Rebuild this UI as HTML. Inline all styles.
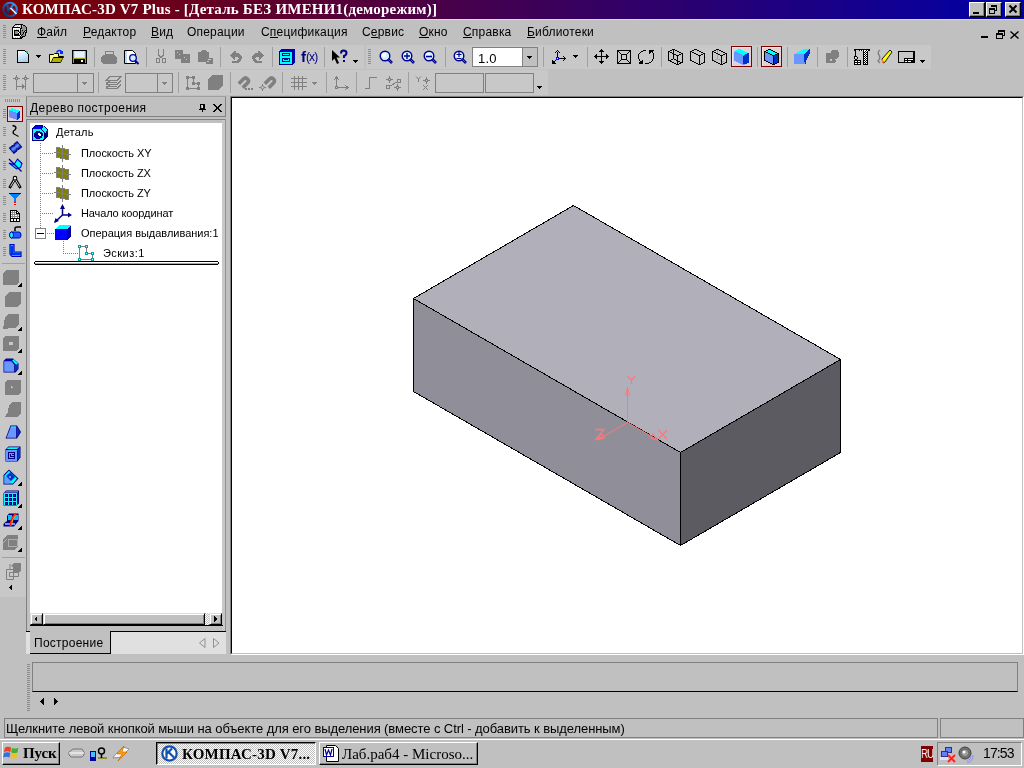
<!DOCTYPE html><html><head><meta charset="utf-8"><style>
html,body{margin:0;padding:0;width:1024px;height:768px;overflow:hidden;background:#c0c0c0;position:relative;font-family:"Liberation Sans",sans-serif}
div,span,svg{position:absolute;box-sizing:border-box}
span{will-change:transform}
svg{overflow:visible}
</style></head><body>
<div style="left:0px;top:0px;width:1024px;height:19px;background:linear-gradient(to right,#800000,#0000a8)"></div>
<svg style="left:2px;top:1px" width="17" height="17" viewBox="0 0 17 17"><defs><linearGradient id="lg1" x1="0" y1="1" x2="1" y2="0"><stop offset="0" stop-color="#002a66"/><stop offset="1" stop-color="#3a9cff"/></linearGradient></defs><circle cx="8" cy="8.5" r="6.8" fill="none" stroke="url(#lg1)" stroke-width="2"/><path d="M5.5 3.5 V13 M6 9.5 L12 3" stroke="url(#lg1)" stroke-width="2" fill="none"/><path d="M8.5 7 L14.5 13" stroke="#e8f4ff" stroke-width="1.6" fill="none"/><path d="M9.5 6 L15.5 12" stroke="#2080f0" stroke-width="1" fill="none"/></svg>
<span style="left:22px;top:1px;font-size:15px;line-height:normal;color:#fff;font-family:'Liberation Serif',serif;font-weight:bold;letter-spacing:0.2px;white-space:pre;">КОМПАС-3D V7 Plus - [Деталь БЕЗ ИМЕНИ1(деморежим)]</span>
<div style="left:0px;top:19px;width:1024px;height:1px;background:#d8d8d8"></div>
<div style="left:969px;top:2px;width:16px;height:15px;background:#c0c0c0;border-top:1px solid #fff;border-left:1px solid #fff;border-right:1px solid #000;border-bottom:1px solid #000;box-shadow:inset -1px -1px 0 #808080"></div>
<div style="left:986px;top:2px;width:16px;height:15px;background:#c0c0c0;border-top:1px solid #fff;border-left:1px solid #fff;border-right:1px solid #000;border-bottom:1px solid #000;box-shadow:inset -1px -1px 0 #808080"></div>
<div style="left:1005px;top:2px;width:16px;height:15px;background:#c0c0c0;border-top:1px solid #fff;border-left:1px solid #fff;border-right:1px solid #000;border-bottom:1px solid #000;box-shadow:inset -1px -1px 0 #808080"></div>
<svg style="left:969px;top:2px" width="16" height="15" viewBox="0 0 16 15" shape-rendering="crispEdges"><rect x="4" y="10" width="6" height="2" fill="#000"/></svg>
<svg style="left:986px;top:3px" width="16" height="14" viewBox="0 0 16 14" shape-rendering="crispEdges"><rect x="5" y="2" width="6" height="1" fill="#000"/><rect x="5" y="3" width="6" height="1" fill="#000"/><rect x="5" y="2" width="1" height="2" fill="#000"/><rect x="10" y="2" width="1" height="6" fill="#000"/><rect x="9" y="7" width="2" height="1" fill="#000"/><rect x="3" y="5" width="6" height="2" fill="#000"/><rect x="3" y="5" width="1" height="6" fill="#000"/><rect x="8" y="5" width="1" height="6" fill="#000"/><rect x="3" y="10" width="6" height="1" fill="#000"/></svg>
<svg style="left:1005px;top:2px" width="16" height="15" viewBox="0 0 16 15"><path d="M4.5 3.5 L11.5 10.5 M11.5 3.5 L4.5 10.5" fill="none" stroke="#000" stroke-width="2" /></svg>
<svg style="left:3px;top:25px" width="3" height="14" viewBox="0 0 3 14" shape-rendering="crispEdges"><rect x="0" y="0" width="3" height="1" fill="#8c8c8c"/><rect x="0" y="2" width="3" height="1" fill="#8c8c8c"/><rect x="0" y="4" width="3" height="1" fill="#8c8c8c"/><rect x="0" y="6" width="3" height="1" fill="#8c8c8c"/><rect x="0" y="8" width="3" height="1" fill="#8c8c8c"/><rect x="0" y="10" width="3" height="1" fill="#8c8c8c"/><rect x="0" y="12" width="3" height="1" fill="#8c8c8c"/></svg>
<svg style="left:11px;top:24px" width="16" height="16" viewBox="0 0 16 16" shape-rendering="crispEdges"><rect x="4" y="0" width="8" height="1" fill="#000"/><rect x="3" y="1" width="1" height="1" fill="#000"/><rect x="6" y="1" width="1" height="1" fill="#fff"/><rect x="8" y="1" width="1" height="1" fill="#fff"/><rect x="10" y="1" width="1" height="1" fill="#000"/><rect x="12" y="1" width="2" height="1" fill="#000"/><rect x="2" y="2" width="1" height="1" fill="#000"/><rect x="4" y="2" width="2" height="1" fill="#fff"/><rect x="7" y="2" width="2" height="1" fill="#fff"/><rect x="10" y="2" width="1" height="1" fill="#000"/><rect x="12" y="2" width="2" height="1" fill="#909090"/><rect x="14" y="2" width="1" height="1" fill="#000"/><rect x="1" y="3" width="8" height="1" fill="#000"/><rect x="10" y="3" width="1" height="1" fill="#000"/><rect x="11" y="3" width="4" height="1" fill="#909090"/><rect x="15" y="3" width="1" height="1" fill="#000"/><rect x="1" y="4" width="1" height="1" fill="#000"/><rect x="2" y="4" width="7" height="1" fill="#fff"/><rect x="9" y="4" width="2" height="1" fill="#000"/><rect x="11" y="4" width="4" height="1" fill="#909090"/><rect x="15" y="4" width="1" height="1" fill="#000"/><rect x="1" y="5" width="1" height="1" fill="#000"/><rect x="2" y="5" width="1" height="1" fill="#fff"/><rect x="4" y="5" width="1" height="1" fill="#fff"/><rect x="6" y="5" width="1" height="1" fill="#fff"/><rect x="8" y="5" width="1" height="1" fill="#fff"/><rect x="9" y="5" width="1" height="1" fill="#000"/><rect x="11" y="5" width="3" height="1" fill="#909090"/><rect x="15" y="5" width="1" height="1" fill="#000"/><rect x="1" y="6" width="1" height="1" fill="#000"/><rect x="2" y="6" width="1" height="1" fill="#fff"/><rect x="3" y="6" width="5" height="1" fill="#000"/><rect x="8" y="6" width="1" height="1" fill="#fff"/><rect x="9" y="6" width="1" height="1" fill="#000"/><rect x="10" y="6" width="1" height="1" fill="#909090"/><rect x="11" y="6" width="1" height="1" fill="#000"/><rect x="12" y="6" width="2" height="1" fill="#909090"/><rect x="14" y="6" width="2" height="1" fill="#000"/><rect x="1" y="7" width="1" height="1" fill="#000"/><rect x="2" y="7" width="1" height="1" fill="#fff"/><rect x="3" y="7" width="1" height="1" fill="#000"/><rect x="4" y="7" width="3" height="1" fill="#909090"/><rect x="7" y="7" width="1" height="1" fill="#000"/><rect x="9" y="7" width="1" height="1" fill="#000"/><rect x="10" y="7" width="3" height="1" fill="#909090"/><rect x="13" y="7" width="1" height="1" fill="#000"/><rect x="15" y="7" width="1" height="1" fill="#000"/><rect x="1" y="8" width="1" height="1" fill="#000"/><rect x="2" y="8" width="1" height="1" fill="#fff"/><rect x="3" y="8" width="1" height="1" fill="#000"/><rect x="4" y="8" width="3" height="1" fill="#909090"/><rect x="7" y="8" width="1" height="1" fill="#fff"/><rect x="8" y="8" width="2" height="1" fill="#000"/><rect x="10" y="8" width="2" height="1" fill="#909090"/><rect x="12" y="8" width="1" height="1" fill="#000"/><rect x="13" y="8" width="1" height="1" fill="#909090"/><rect x="14" y="8" width="2" height="1" fill="#000"/><rect x="1" y="9" width="1" height="1" fill="#000"/><rect x="2" y="9" width="1" height="1" fill="#fff"/><rect x="3" y="9" width="1" height="1" fill="#000"/><rect x="4" y="9" width="3" height="1" fill="#909090"/><rect x="7" y="9" width="1" height="1" fill="#000"/><rect x="8" y="9" width="1" height="1" fill="#fff"/><rect x="9" y="9" width="1" height="1" fill="#000"/><rect x="10" y="9" width="2" height="1" fill="#909090"/><rect x="12" y="9" width="1" height="1" fill="#000"/><rect x="14" y="9" width="1" height="1" fill="#000"/><rect x="1" y="10" width="1" height="1" fill="#000"/><rect x="2" y="10" width="1" height="1" fill="#fff"/><rect x="3" y="10" width="5" height="1" fill="#000"/><rect x="9" y="10" width="1" height="1" fill="#000"/><rect x="10" y="10" width="1" height="1" fill="#909090"/><rect x="11" y="10" width="1" height="1" fill="#000"/><rect x="12" y="10" width="2" height="1" fill="#909090"/><rect x="14" y="10" width="1" height="1" fill="#000"/><rect x="1" y="11" width="1" height="1" fill="#000"/><rect x="2" y="11" width="1" height="1" fill="#fff"/><rect x="3" y="11" width="6" height="1" fill="#000"/><rect x="9" y="11" width="1" height="1" fill="#fff"/><rect x="10" y="11" width="1" height="1" fill="#000"/><rect x="11" y="11" width="3" height="1" fill="#909090"/><rect x="14" y="11" width="1" height="1" fill="#000"/><rect x="1" y="12" width="1" height="1" fill="#000"/><rect x="2" y="12" width="7" height="1" fill="#fff"/><rect x="9" y="12" width="1" height="1" fill="#000"/><rect x="10" y="12" width="1" height="1" fill="#909090"/><rect x="11" y="12" width="3" height="1" fill="#000"/><rect x="1" y="13" width="1" height="1" fill="#000"/><rect x="3" y="13" width="1" height="1" fill="#fff"/><rect x="5" y="13" width="1" height="1" fill="#fff"/><rect x="7" y="13" width="1" height="1" fill="#fff"/><rect x="9" y="13" width="3" height="1" fill="#000"/><rect x="1" y="14" width="10" height="1" fill="#000"/></svg>
<span style="left:37px;top:25px;font-size:12px;line-height:normal;color:#000;font-family:'Liberation Sans',sans-serif;font-weight:normal;letter-spacing:0.2px;white-space:pre;">Файл</span>
<span style="left:83px;top:25px;font-size:12px;line-height:normal;color:#000;font-family:'Liberation Sans',sans-serif;font-weight:normal;letter-spacing:0.2px;white-space:pre;">Редактор</span>
<span style="left:151px;top:25px;font-size:12px;line-height:normal;color:#000;font-family:'Liberation Sans',sans-serif;font-weight:normal;letter-spacing:0.2px;white-space:pre;">Вид</span>
<span style="left:187px;top:25px;font-size:12px;line-height:normal;color:#000;font-family:'Liberation Sans',sans-serif;font-weight:normal;letter-spacing:0.2px;white-space:pre;">Операции</span>
<span style="left:261px;top:25px;font-size:12px;line-height:normal;color:#000;font-family:'Liberation Sans',sans-serif;font-weight:normal;letter-spacing:0.2px;white-space:pre;">Спецификация</span>
<span style="left:362px;top:25px;font-size:12px;line-height:normal;color:#000;font-family:'Liberation Sans',sans-serif;font-weight:normal;letter-spacing:0.2px;white-space:pre;">Сервис</span>
<span style="left:419px;top:25px;font-size:12px;line-height:normal;color:#000;font-family:'Liberation Sans',sans-serif;font-weight:normal;letter-spacing:0.2px;white-space:pre;">Окно</span>
<span style="left:463px;top:25px;font-size:12px;line-height:normal;color:#000;font-family:'Liberation Sans',sans-serif;font-weight:normal;letter-spacing:0.2px;white-space:pre;">Справка</span>
<span style="left:527px;top:25px;font-size:12px;line-height:normal;color:#000;font-family:'Liberation Sans',sans-serif;font-weight:normal;letter-spacing:0.2px;white-space:pre;">Библиотеки</span>
<div style="left:37px;top:37px;width:10px;height:1px;background:#000"></div>
<div style="left:83px;top:37px;width:8px;height:1px;background:#000"></div>
<div style="left:151px;top:37px;width:8px;height:1px;background:#000"></div>
<div style="left:270px;top:37px;width:8px;height:1px;background:#000"></div>
<div style="left:371px;top:37px;width:7px;height:1px;background:#000"></div>
<div style="left:419px;top:37px;width:10px;height:1px;background:#000"></div>
<div style="left:463px;top:37px;width:9px;height:1px;background:#000"></div>
<div style="left:527px;top:37px;width:8px;height:1px;background:#000"></div>
<svg style="left:981px;top:36px" width="7" height="2" viewBox="0 0 7 2" shape-rendering="crispEdges"><rect x="0" y="0" width="7" height="2" fill="#000"/></svg>
<svg style="left:996px;top:30px" width="9" height="9" viewBox="0 0 9 9" shape-rendering="crispEdges"><rect x="2" y="0" width="7" height="2" fill="#000"/><rect x="2" y="0" width="1" height="3" fill="#000"/><rect x="8" y="0" width="1" height="6" fill="#000"/><rect x="7" y="5" width="2" height="1" fill="#000"/><rect x="0" y="3" width="7" height="2" fill="#000"/><rect x="0" y="3" width="1" height="6" fill="#000"/><rect x="6" y="3" width="1" height="6" fill="#000"/><rect x="0" y="8" width="7" height="1" fill="#000"/></svg>
<svg style="left:1010px;top:31px" width="9" height="8" viewBox="0 0 9 8"><path d="M0.5 0.5 L8.5 7.5 M8.5 0.5 L0.5 7.5" fill="none" stroke="#000" stroke-width="1.4" /></svg>
<div style="left:0px;top:45px;width:364px;height:24px;background:#c8c8c8"></div>
<div style="left:366px;top:45px;width:565px;height:24px;background:#c8c8c8"></div>
<div style="left:0px;top:70px;width:548px;height:25px;background:#c8c8c8"></div>
<svg style="left:3px;top:49px" width="3" height="16" viewBox="0 0 3 16" shape-rendering="crispEdges"><rect x="0" y="0" width="3" height="1" fill="#8c8c8c"/><rect x="0" y="2" width="3" height="1" fill="#8c8c8c"/><rect x="0" y="4" width="3" height="1" fill="#8c8c8c"/><rect x="0" y="6" width="3" height="1" fill="#8c8c8c"/><rect x="0" y="8" width="3" height="1" fill="#8c8c8c"/><rect x="0" y="10" width="3" height="1" fill="#8c8c8c"/><rect x="0" y="12" width="3" height="1" fill="#8c8c8c"/><rect x="0" y="14" width="3" height="1" fill="#8c8c8c"/></svg>
<svg style="left:17px;top:50px" width="12" height="13" viewBox="0 0 12 13" shape-rendering="crispEdges"><path d="M0.5 0.5 H7.5 L11.5 4.5 V12.5 H0.5 Z" fill="url(#gnew)" stroke="#000" stroke-width="1" /><defs><linearGradient id="gnew" x1="0" y1="0" x2="0.3" y2="1"><stop offset="0" stop-color="#fff"/><stop offset="1" stop-color="#a8d0f0"/></linearGradient></defs><rect x="9" y="1" width="2" height="2" fill="#00c0c0"/></svg>
<svg style="left:36px;top:55px" width="5" height="3" viewBox="0 0 5 3" shape-rendering="crispEdges"><rect x="0" y="0" width="5" height="1" fill="#000"/><rect x="1" y="1" width="3" height="1" fill="#000"/><rect x="2" y="2" width="1" height="1" fill="#000"/></svg>
<svg style="left:48px;top:49px" width="17" height="15" viewBox="0 0 17 15"><path d="M1.5 5.5 H5.5 L6.5 4.5 H10.5 V7.5 H15.5 L12.5 13.5 H1.5 Z" fill="#ffff90" stroke="#000" stroke-width="1" /><path d="M3.5 13 L5.5 8.5 H15.5" fill="none" stroke="#000" stroke-width="1" /><path d="M4 13 L6 9 H15 L12 13 Z" fill="#b0b000" stroke="none" stroke-width="1" /><path d="M8.5 3.5 Q11 0 13.5 2.5" fill="none" stroke="#0030ff" stroke-width="1.5" /><rect x="12" y="2" width="3" height="3" fill="#0030ff"/></svg>
<svg style="left:72px;top:50px" width="15" height="14" viewBox="0 0 15 14" shape-rendering="crispEdges"><rect x="0" y="0" width="15" height="14" fill="#000"/><rect x="2" y="1" width="11" height="7" fill="#c8e0f0"/><rect x="3" y="2" width="9" height="5" fill="#e8f0ff"/><rect x="1" y="1" width="1" height="12" fill="#a0a000"/><rect x="13" y="1" width="1" height="12" fill="#a0a000"/><rect x="2" y="8" width="11" height="1" fill="#a0a000"/><rect x="3" y="9" width="9" height="4" fill="#000"/><rect x="9" y="10" width="2" height="2" fill="#fff"/></svg>
<div style="left:94px;top:47px;width:1px;height:20px;background:#a0a0a0"></div>
<svg style="left:101px;top:50px" width="17" height="15" viewBox="0 0 17 15" shape-rendering="crispEdges"><path d="M4 1 H12 V4 H4 Z" fill="none" stroke="#808080" stroke-width="1" /><path d="M2 5 H14 L16 8 V12 L14 14 H2 L0 12 V8 Z" fill="#808080" stroke="none" stroke-width="1" /></svg>
<svg style="left:124px;top:50px" width="16" height="15" viewBox="0 0 16 15"><path d="M0.5 0.5 H8.5 L11.5 3.5 V13.5 H0.5 Z" fill="#fff" stroke="#000" stroke-width="1" /><rect x="1" y="1" width="2" height="12" fill="#c0d8f0"/><circle cx="9" cy="8" r="3.3" fill="#c8f0ff" stroke="#0000a0" stroke-width="1.3"/><path d="M11 10.5 L14.5 14" fill="none" stroke="#0000a0" stroke-width="2" /></svg>
<div style="left:146px;top:47px;width:1px;height:20px;background:#a0a0a0"></div>
<svg style="left:156px;top:49px" width="10" height="15" viewBox="0 0 10 15" shape-rendering="crispEdges"><path d="M2.5 0 V6 L5 9 L7.5 6 V0" fill="none" stroke="#808080" stroke-width="1.2" /><rect x="0" y="9" width="4" height="5" fill="#808080"/><rect x="1" y="10" width="2" height="3" fill="#c8c8c8"/><rect x="6" y="9" width="4" height="5" fill="#808080"/><rect x="7" y="10" width="2" height="3" fill="#c8c8c8"/></svg>
<svg style="left:175px;top:49px" width="16" height="15" viewBox="0 0 16 15" shape-rendering="crispEdges"><rect x="0" y="1" width="8" height="9" fill="#808080"/><rect x="6" y="5" width="9" height="9" fill="#808080"/><rect x="2" y="3" width="1" height="1" fill="#c8c8c8"/><rect x="4" y="5" width="1" height="1" fill="#c8c8c8"/><rect x="9" y="8" width="1" height="1" fill="#c8c8c8"/><rect x="11" y="10" width="1" height="1" fill="#c8c8c8"/></svg>
<svg style="left:197px;top:49px" width="17" height="16" viewBox="0 0 17 16" shape-rendering="crispEdges"><path d="M1 3 H4 L5 1 H9 L10 3 H12 V9 H16 V15 H9 V13 H1 Z" fill="#808080" stroke="none" stroke-width="1" /><rect x="11" y="10" width="3" height="1" fill="#c8c8c8"/><rect x="10" y="12" width="2" height="1" fill="#c8c8c8"/></svg>
<div style="left:220px;top:47px;width:1px;height:20px;background:#a0a0a0"></div>
<svg style="left:230px;top:51px" width="13" height="12" viewBox="0 0 13 12" shape-rendering="crispEdges"><rect x="4" y="0" width="2" height="1" fill="#808080"/><rect x="3" y="1" width="3" height="1" fill="#808080"/><rect x="2" y="2" width="7" height="1" fill="#808080"/><rect x="1" y="3" width="9" height="1" fill="#808080"/><rect x="0" y="4" width="11" height="1" fill="#808080"/><rect x="1" y="5" width="11" height="1" fill="#808080"/><rect x="2" y="6" width="3" height="1" fill="#808080"/><rect x="8" y="6" width="4" height="1" fill="#808080"/><rect x="3" y="7" width="2" height="1" fill="#808080"/><rect x="9" y="7" width="3" height="1" fill="#808080"/><rect x="4" y="8" width="1" height="1" fill="#808080"/><rect x="8" y="8" width="3" height="1" fill="#808080"/><rect x="7" y="9" width="4" height="1" fill="#808080"/><rect x="2" y="10" width="8" height="1" fill="#808080"/><rect x="2" y="11" width="7" height="1" fill="#808080"/></svg>
<svg style="left:251px;top:51px" width="13" height="12" viewBox="0 0 13 12" shape-rendering="crispEdges"><g transform="translate(13 0) scale(-1 1)"><rect x="4" y="0" width="2" height="1" fill="#808080"/><rect x="3" y="1" width="3" height="1" fill="#808080"/><rect x="2" y="2" width="7" height="1" fill="#808080"/><rect x="1" y="3" width="9" height="1" fill="#808080"/><rect x="0" y="4" width="11" height="1" fill="#808080"/><rect x="1" y="5" width="11" height="1" fill="#808080"/><rect x="2" y="6" width="3" height="1" fill="#808080"/><rect x="8" y="6" width="4" height="1" fill="#808080"/><rect x="3" y="7" width="2" height="1" fill="#808080"/><rect x="9" y="7" width="3" height="1" fill="#808080"/><rect x="4" y="8" width="1" height="1" fill="#808080"/><rect x="8" y="8" width="3" height="1" fill="#808080"/><rect x="7" y="9" width="4" height="1" fill="#808080"/><rect x="2" y="10" width="8" height="1" fill="#808080"/><rect x="2" y="11" width="7" height="1" fill="#808080"/></g></svg>
<div style="left:272px;top:47px;width:1px;height:20px;background:#a0a0a0"></div>
<svg style="left:279px;top:49px" width="17" height="16" viewBox="0 0 17 16" shape-rendering="crispEdges"><path d="M0 2 L2 0 H16 V13 L14 15 H0 Z" fill="#0000c0" stroke="none" stroke-width="1" /><rect x="1" y="2" width="13" height="13" fill="#00ffff"/><rect x="1" y="2" width="13" height="1" fill="#0000a0"/><rect x="0" y="2" width="1" height="14" fill="#000080"/><rect x="0" y="15" width="14" height="1" fill="#000080"/><rect x="13" y="2" width="1" height="13" fill="#000080"/><rect x="3" y="4" width="8" height="3" fill="#0000a0"/><rect x="4" y="5" width="6" height="1" fill="#00ffff"/><rect x="3" y="9" width="8" height="4" fill="#0000a0"/><rect x="4" y="10" width="6" height="2" fill="#00ffff"/><rect x="5" y="10" width="4" height="1" fill="#0000a0"/></svg>
<span style="left:301px;top:48px;font-size:15px;line-height:normal;color:#000080;font-family:'Liberation Sans',sans-serif;font-weight:bold;letter-spacing:0px;white-space:pre;">f</span>
<span style="left:306px;top:50px;font-size:12px;line-height:normal;color:#000080;font-family:'Liberation Sans',sans-serif;font-weight:normal;letter-spacing:-0.9px;white-space:pre;">(x)</span>
<div style="left:324px;top:47px;width:1px;height:20px;background:#a0a0a0"></div>
<svg style="left:331px;top:50px" width="17" height="15" viewBox="0 0 17 15"><path d="M1 0 V11 L3.5 8.5 L6 14 L8 13 L5.5 7.5 H9 Z" fill="#000" stroke="none" stroke-width="1" /><path d="M10 3.5 Q10 0.5 12.5 0.5 Q15.5 0.5 15.5 3 Q15.5 5 13 6 V8" fill="none" stroke="#000080" stroke-width="2" /><rect x="12" y="10" width="2" height="2" fill="#000080"/></svg>
<svg style="left:353px;top:60px" width="5" height="3" viewBox="0 0 5 3" shape-rendering="crispEdges"><rect x="0" y="0" width="5" height="1" fill="#000"/><rect x="1" y="1" width="3" height="1" fill="#000"/><rect x="2" y="2" width="1" height="1" fill="#000"/></svg>
<svg style="left:368px;top:49px" width="3" height="16" viewBox="0 0 3 16" shape-rendering="crispEdges"><rect x="0" y="0" width="3" height="1" fill="#8c8c8c"/><rect x="0" y="2" width="3" height="1" fill="#8c8c8c"/><rect x="0" y="4" width="3" height="1" fill="#8c8c8c"/><rect x="0" y="6" width="3" height="1" fill="#8c8c8c"/><rect x="0" y="8" width="3" height="1" fill="#8c8c8c"/><rect x="0" y="10" width="3" height="1" fill="#8c8c8c"/><rect x="0" y="12" width="3" height="1" fill="#8c8c8c"/><rect x="0" y="14" width="3" height="1" fill="#8c8c8c"/></svg>
<svg style="left:379px;top:50px" width="14" height="14" viewBox="0 0 14 14"><circle cx="6" cy="6" r="4.8" fill="#d0f0ff" stroke="#000090" stroke-width="1.4"/><circle cx="5" cy="5" r="2" fill="#fff"/><path d="M9 9 L13 13" fill="none" stroke="#000090" stroke-width="2.6" /><path d="M9.5 9.5 L12.5 12.5" fill="none" stroke="#6060ff" stroke-width="0.8" /></svg>
<svg style="left:401px;top:50px" width="14" height="14" viewBox="0 0 14 14"><circle cx="6" cy="6" r="4.8" fill="#d0f0ff" stroke="#000090" stroke-width="1.4"/><circle cx="5" cy="5" r="2" fill="#fff"/><path d="M9 9 L13 13" fill="none" stroke="#000090" stroke-width="2.6" /><path d="M9.5 9.5 L12.5 12.5" fill="none" stroke="#6060ff" stroke-width="0.8" /><path d="M3 6 H9 M6 3 V9" fill="none" stroke="#000090" stroke-width="1.4" /></svg>
<svg style="left:423px;top:50px" width="14" height="14" viewBox="0 0 14 14"><circle cx="6" cy="6" r="4.8" fill="#d0f0ff" stroke="#000090" stroke-width="1.4"/><circle cx="5" cy="5" r="2" fill="#fff"/><path d="M9 9 L13 13" fill="none" stroke="#000090" stroke-width="2.6" /><path d="M9.5 9.5 L12.5 12.5" fill="none" stroke="#6060ff" stroke-width="0.8" /><path d="M3 6.5 H9" fill="none" stroke="#000090" stroke-width="1.6" /></svg>
<div style="left:445px;top:47px;width:1px;height:20px;background:#a0a0a0"></div>
<svg style="left:453px;top:50px" width="14" height="14" viewBox="0 0 14 14"><circle cx="6" cy="6" r="4.8" fill="#d0f0ff" stroke="#000090" stroke-width="1.4"/><circle cx="5" cy="5" r="2" fill="#fff"/><path d="M9 9 L13 13" fill="none" stroke="#000090" stroke-width="2.6" /><path d="M9.5 9.5 L12.5 12.5" fill="none" stroke="#6060ff" stroke-width="0.8" /><path d="M3.5 4.5 H8.5 M6 2 V7 M3.5 8.5 H8.5" fill="none" stroke="#000090" stroke-width="1.2" /></svg>
<div style="left:472px;top:47px;width:66px;height:20px;background:#fff;border:1px solid #808080"></div>
<div style="left:522px;top:48px;width:15px;height:18px;background:#c0c0c0;border-left:1px solid #808080"></div>
<span style="left:478px;top:51px;font-size:13px;line-height:normal;color:#000;font-family:'Liberation Sans',sans-serif;font-weight:normal;letter-spacing:0.2px;white-space:pre;">1.0</span>
<svg style="left:527px;top:56px" width="5" height="3" viewBox="0 0 5 3" shape-rendering="crispEdges"><rect x="0" y="0" width="5" height="1" fill="#000"/><rect x="1" y="1" width="3" height="1" fill="#000"/><rect x="2" y="2" width="1" height="1" fill="#000"/></svg>
<div style="left:543px;top:47px;width:1px;height:20px;background:#a0a0a0"></div>
<svg style="left:552px;top:49px" width="14" height="15" viewBox="0 0 14 15" shape-rendering="crispEdges"><rect x="5" y="1" width="1" height="1" fill="#000"/><rect x="4" y="2" width="1" height="1" fill="#000"/><rect x="6" y="2" width="1" height="1" fill="#000"/><rect x="3" y="3" width="1" height="1" fill="#000"/><rect x="5" y="3" width="1" height="1" fill="#000"/><rect x="7" y="3" width="1" height="1" fill="#000"/><rect x="5" y="4" width="1" height="1" fill="#000"/><rect x="5" y="5" width="1" height="1" fill="#000"/><rect x="5" y="6" width="1" height="1" fill="#000"/><rect x="5" y="7" width="1" height="1" fill="#000"/><rect x="11" y="7" width="1" height="1" fill="#000"/><rect x="4" y="8" width="3" height="1" fill="#0000ff"/><rect x="12" y="8" width="1" height="1" fill="#000"/><rect x="4" y="9" width="1" height="1" fill="#0000ff"/><rect x="5" y="9" width="1" height="1" fill="#fff"/><rect x="6" y="9" width="1" height="1" fill="#0000ff"/><rect x="7" y="9" width="7" height="1" fill="#000"/><rect x="4" y="10" width="3" height="1" fill="#0000ff"/><rect x="12" y="10" width="1" height="1" fill="#000"/><rect x="0" y="11" width="1" height="1" fill="#000"/><rect x="3" y="11" width="1" height="1" fill="#000"/><rect x="11" y="11" width="1" height="1" fill="#000"/><rect x="0" y="12" width="3" height="1" fill="#000"/><rect x="0" y="13" width="3" height="1" fill="#000"/><rect x="0" y="14" width="4" height="1" fill="#000"/></svg>
<svg style="left:573px;top:55px" width="5" height="3" viewBox="0 0 5 3" shape-rendering="crispEdges"><rect x="0" y="0" width="5" height="1" fill="#000"/><rect x="1" y="1" width="3" height="1" fill="#000"/><rect x="2" y="2" width="1" height="1" fill="#000"/></svg>
<div style="left:587px;top:47px;width:1px;height:20px;background:#a0a0a0"></div>
<svg style="left:594px;top:49px" width="15" height="15" viewBox="0 0 15 15" shape-rendering="crispEdges"><rect x="7" y="0" width="1" height="1" fill="#000"/><rect x="6" y="1" width="3" height="1" fill="#000"/><rect x="5" y="2" width="5" height="1" fill="#000"/><rect x="7" y="3" width="1" height="1" fill="#000"/><rect x="7" y="4" width="1" height="1" fill="#000"/><rect x="2" y="5" width="1" height="1" fill="#000"/><rect x="7" y="5" width="1" height="1" fill="#000"/><rect x="12" y="5" width="1" height="1" fill="#000"/><rect x="1" y="6" width="2" height="1" fill="#000"/><rect x="7" y="6" width="1" height="1" fill="#000"/><rect x="12" y="6" width="2" height="1" fill="#000"/><rect x="0" y="7" width="15" height="1" fill="#000"/><rect x="1" y="8" width="2" height="1" fill="#000"/><rect x="7" y="8" width="1" height="1" fill="#000"/><rect x="12" y="8" width="2" height="1" fill="#000"/><rect x="2" y="9" width="1" height="1" fill="#000"/><rect x="7" y="9" width="1" height="1" fill="#000"/><rect x="12" y="9" width="1" height="1" fill="#000"/><rect x="7" y="10" width="1" height="1" fill="#000"/><rect x="7" y="11" width="1" height="1" fill="#000"/><rect x="5" y="12" width="5" height="1" fill="#000"/><rect x="6" y="13" width="3" height="1" fill="#000"/><rect x="7" y="14" width="1" height="1" fill="#000"/></svg>
<svg style="left:617px;top:50px" width="14" height="14" viewBox="0 0 14 14" shape-rendering="crispEdges"><rect x="0" y="0" width="14" height="1" fill="#000"/><rect x="0" y="1" width="2" height="1" fill="#000"/><rect x="12" y="1" width="2" height="1" fill="#000"/><rect x="0" y="2" width="1" height="1" fill="#000"/><rect x="2" y="2" width="1" height="1" fill="#000"/><rect x="11" y="2" width="1" height="1" fill="#000"/><rect x="13" y="2" width="1" height="1" fill="#000"/><rect x="0" y="3" width="1" height="1" fill="#000"/><rect x="3" y="3" width="1" height="1" fill="#000"/><rect x="10" y="3" width="1" height="1" fill="#000"/><rect x="13" y="3" width="1" height="1" fill="#000"/><rect x="0" y="4" width="1" height="1" fill="#000"/><rect x="4" y="4" width="6" height="1" fill="#000"/><rect x="13" y="4" width="1" height="1" fill="#000"/><rect x="0" y="5" width="1" height="1" fill="#000"/><rect x="4" y="5" width="1" height="1" fill="#000"/><rect x="9" y="5" width="1" height="1" fill="#000"/><rect x="13" y="5" width="1" height="1" fill="#000"/><rect x="0" y="6" width="1" height="1" fill="#000"/><rect x="4" y="6" width="1" height="1" fill="#000"/><rect x="9" y="6" width="1" height="1" fill="#000"/><rect x="13" y="6" width="1" height="1" fill="#000"/><rect x="0" y="7" width="1" height="1" fill="#000"/><rect x="4" y="7" width="1" height="1" fill="#000"/><rect x="9" y="7" width="1" height="1" fill="#000"/><rect x="13" y="7" width="1" height="1" fill="#000"/><rect x="0" y="8" width="1" height="1" fill="#000"/><rect x="4" y="8" width="1" height="1" fill="#000"/><rect x="9" y="8" width="1" height="1" fill="#000"/><rect x="13" y="8" width="1" height="1" fill="#000"/><rect x="0" y="9" width="1" height="1" fill="#000"/><rect x="4" y="9" width="6" height="1" fill="#000"/><rect x="13" y="9" width="1" height="1" fill="#000"/><rect x="0" y="10" width="1" height="1" fill="#000"/><rect x="3" y="10" width="1" height="1" fill="#000"/><rect x="10" y="10" width="1" height="1" fill="#000"/><rect x="13" y="10" width="1" height="1" fill="#000"/><rect x="0" y="11" width="1" height="1" fill="#000"/><rect x="2" y="11" width="1" height="1" fill="#000"/><rect x="11" y="11" width="1" height="1" fill="#000"/><rect x="13" y="11" width="1" height="1" fill="#000"/><rect x="0" y="12" width="2" height="1" fill="#000"/><rect x="12" y="12" width="2" height="1" fill="#000"/><rect x="0" y="13" width="14" height="1" fill="#000"/></svg>
<svg style="left:637px;top:49px" width="18" height="16" viewBox="0 0 18 16" shape-rendering="crispEdges"><rect x="6" y="1" width="3" height="1" fill="#000"/><rect x="12" y="1" width="5" height="1" fill="#000"/><rect x="4" y="2" width="2" height="1" fill="#000"/><rect x="12" y="2" width="4" height="1" fill="#000"/><rect x="3" y="3" width="1" height="1" fill="#000"/><rect x="12" y="3" width="2" height="1" fill="#000"/><rect x="15" y="3" width="1" height="1" fill="#000"/><rect x="2" y="4" width="1" height="1" fill="#000"/><rect x="12" y="4" width="1" height="1" fill="#000"/><rect x="16" y="4" width="1" height="1" fill="#000"/><rect x="1" y="5" width="1" height="1" fill="#000"/><rect x="16" y="5" width="1" height="1" fill="#000"/><rect x="1" y="6" width="1" height="1" fill="#000"/><rect x="16" y="6" width="1" height="1" fill="#000"/><rect x="1" y="7" width="1" height="1" fill="#000"/><rect x="16" y="7" width="1" height="1" fill="#000"/><rect x="1" y="8" width="1" height="1" fill="#000"/><rect x="16" y="8" width="1" height="1" fill="#000"/><rect x="1" y="9" width="1" height="1" fill="#000"/><rect x="16" y="9" width="1" height="1" fill="#000"/><rect x="2" y="10" width="1" height="1" fill="#000"/><rect x="15" y="10" width="1" height="1" fill="#000"/><rect x="2" y="11" width="1" height="1" fill="#000"/><rect x="5" y="11" width="1" height="1" fill="#000"/><rect x="15" y="11" width="1" height="1" fill="#000"/><rect x="3" y="12" width="3" height="1" fill="#000"/><rect x="14" y="12" width="1" height="1" fill="#000"/><rect x="2" y="13" width="4" height="1" fill="#000"/><rect x="12" y="13" width="2" height="1" fill="#000"/><rect x="2" y="14" width="4" height="1" fill="#000"/><rect x="8" y="14" width="4" height="1" fill="#000"/></svg>
<div style="left:661px;top:47px;width:1px;height:20px;background:#a0a0a0"></div>
<svg style="left:668px;top:49px" width="15" height="16" viewBox="0 0 15 16" shape-rendering="crispEdges"><rect x="4" y="0" width="3" height="1" fill="#000"/><rect x="2" y="1" width="2" height="1" fill="#000"/><rect x="5" y="1" width="1" height="1" fill="#000"/><rect x="7" y="1" width="2" height="1" fill="#000"/><rect x="0" y="2" width="2" height="1" fill="#000"/><rect x="5" y="2" width="1" height="1" fill="#000"/><rect x="9" y="2" width="2" height="1" fill="#000"/><rect x="0" y="3" width="1" height="1" fill="#000"/><rect x="2" y="3" width="2" height="1" fill="#000"/><rect x="5" y="3" width="1" height="1" fill="#000"/><rect x="11" y="3" width="2" height="1" fill="#000"/><rect x="0" y="4" width="1" height="1" fill="#000"/><rect x="4" y="4" width="2" height="1" fill="#000"/><rect x="13" y="4" width="2" height="1" fill="#000"/><rect x="0" y="5" width="1" height="1" fill="#000"/><rect x="5" y="5" width="1" height="1" fill="#000"/><rect x="6" y="5" width="2" height="1" fill="#000"/><rect x="11" y="5" width="2" height="1" fill="#000"/><rect x="14" y="5" width="1" height="1" fill="#000"/><rect x="0" y="6" width="1" height="1" fill="#000"/><rect x="5" y="6" width="1" height="1" fill="#000"/><rect x="8" y="6" width="3" height="1" fill="#000"/><rect x="14" y="6" width="1" height="1" fill="#000"/><rect x="0" y="7" width="1" height="1" fill="#000"/><rect x="5" y="7" width="1" height="1" fill="#000"/><rect x="9" y="7" width="1" height="1" fill="#000"/><rect x="14" y="7" width="1" height="1" fill="#000"/><rect x="0" y="8" width="1" height="1" fill="#000"/><rect x="5" y="8" width="1" height="1" fill="#000"/><rect x="9" y="8" width="1" height="1" fill="#000"/><rect x="14" y="8" width="1" height="1" fill="#000"/><rect x="0" y="9" width="1" height="1" fill="#000"/><rect x="5" y="9" width="1" height="1" fill="#000"/><rect x="9" y="9" width="1" height="1" fill="#000"/><rect x="14" y="9" width="1" height="1" fill="#000"/><rect x="0" y="10" width="1" height="1" fill="#000"/><rect x="3" y="10" width="2" height="1" fill="#000"/><rect x="6" y="10" width="2" height="1" fill="#000"/><rect x="9" y="10" width="1" height="1" fill="#000"/><rect x="14" y="10" width="1" height="1" fill="#000"/><rect x="0" y="11" width="2" height="1" fill="#000"/><rect x="2" y="11" width="1" height="1" fill="#000"/><rect x="8" y="11" width="1" height="1" fill="#000"/><rect x="9" y="11" width="1" height="1" fill="#000"/><rect x="14" y="11" width="1" height="1" fill="#000"/><rect x="2" y="12" width="2" height="1" fill="#000"/><rect x="9" y="12" width="1" height="1" fill="#000"/><rect x="10" y="12" width="2" height="1" fill="#000"/><rect x="14" y="12" width="1" height="1" fill="#000"/><rect x="4" y="13" width="2" height="1" fill="#000"/><rect x="9" y="13" width="1" height="1" fill="#000"/><rect x="12" y="13" width="1" height="1" fill="#000"/><rect x="13" y="13" width="2" height="1" fill="#000"/><rect x="6" y="14" width="2" height="1" fill="#000"/><rect x="9" y="14" width="1" height="1" fill="#000"/><rect x="11" y="14" width="2" height="1" fill="#000"/><rect x="8" y="15" width="3" height="1" fill="#000"/></svg>
<svg style="left:690px;top:49px" width="15" height="16" viewBox="0 0 15 16" shape-rendering="crispEdges"><rect x="4" y="0" width="3" height="1" fill="#000"/><rect x="2" y="1" width="2" height="1" fill="#000"/><rect x="7" y="1" width="2" height="1" fill="#000"/><rect x="0" y="2" width="2" height="1" fill="#000"/><rect x="9" y="2" width="2" height="1" fill="#000"/><rect x="0" y="3" width="1" height="1" fill="#000"/><rect x="2" y="3" width="2" height="1" fill="#000"/><rect x="11" y="3" width="2" height="1" fill="#000"/><rect x="0" y="4" width="1" height="1" fill="#000"/><rect x="4" y="4" width="2" height="1" fill="#000"/><rect x="13" y="4" width="2" height="1" fill="#000"/><rect x="0" y="5" width="1" height="1" fill="#000"/><rect x="6" y="5" width="2" height="1" fill="#000"/><rect x="11" y="5" width="2" height="1" fill="#000"/><rect x="14" y="5" width="1" height="1" fill="#000"/><rect x="0" y="6" width="1" height="1" fill="#000"/><rect x="8" y="6" width="3" height="1" fill="#000"/><rect x="14" y="6" width="1" height="1" fill="#000"/><rect x="0" y="7" width="1" height="1" fill="#000"/><rect x="9" y="7" width="1" height="1" fill="#000"/><rect x="14" y="7" width="1" height="1" fill="#000"/><rect x="0" y="8" width="1" height="1" fill="#000"/><rect x="9" y="8" width="1" height="1" fill="#000"/><rect x="14" y="8" width="1" height="1" fill="#000"/><rect x="0" y="9" width="1" height="1" fill="#000"/><rect x="9" y="9" width="1" height="1" fill="#000"/><rect x="14" y="9" width="1" height="1" fill="#000"/><rect x="0" y="10" width="1" height="1" fill="#000"/><rect x="9" y="10" width="1" height="1" fill="#000"/><rect x="14" y="10" width="1" height="1" fill="#000"/><rect x="0" y="11" width="2" height="1" fill="#000"/><rect x="9" y="11" width="1" height="1" fill="#000"/><rect x="14" y="11" width="1" height="1" fill="#000"/><rect x="2" y="12" width="2" height="1" fill="#000"/><rect x="9" y="12" width="1" height="1" fill="#000"/><rect x="14" y="12" width="1" height="1" fill="#000"/><rect x="4" y="13" width="2" height="1" fill="#000"/><rect x="9" y="13" width="1" height="1" fill="#000"/><rect x="13" y="13" width="2" height="1" fill="#000"/><rect x="6" y="14" width="2" height="1" fill="#000"/><rect x="9" y="14" width="1" height="1" fill="#000"/><rect x="11" y="14" width="2" height="1" fill="#000"/><rect x="8" y="15" width="3" height="1" fill="#000"/></svg>
<svg style="left:712px;top:49px" width="15" height="16" viewBox="0 0 15 16" shape-rendering="crispEdges"><rect x="4" y="0" width="3" height="1" fill="#000"/><rect x="2" y="1" width="2" height="1" fill="#000"/><rect x="5" y="1" width="1" height="1" fill="#a0a0a0"/><rect x="7" y="1" width="2" height="1" fill="#000"/><rect x="0" y="2" width="2" height="1" fill="#000"/><rect x="5" y="2" width="1" height="1" fill="#a0a0a0"/><rect x="9" y="2" width="2" height="1" fill="#000"/><rect x="0" y="3" width="1" height="1" fill="#000"/><rect x="2" y="3" width="2" height="1" fill="#000"/><rect x="5" y="3" width="1" height="1" fill="#a0a0a0"/><rect x="11" y="3" width="2" height="1" fill="#000"/><rect x="0" y="4" width="1" height="1" fill="#000"/><rect x="4" y="4" width="2" height="1" fill="#000"/><rect x="13" y="4" width="2" height="1" fill="#000"/><rect x="0" y="5" width="1" height="1" fill="#000"/><rect x="5" y="5" width="1" height="1" fill="#a0a0a0"/><rect x="6" y="5" width="2" height="1" fill="#000"/><rect x="11" y="5" width="2" height="1" fill="#000"/><rect x="14" y="5" width="1" height="1" fill="#000"/><rect x="0" y="6" width="1" height="1" fill="#000"/><rect x="5" y="6" width="1" height="1" fill="#a0a0a0"/><rect x="8" y="6" width="3" height="1" fill="#000"/><rect x="14" y="6" width="1" height="1" fill="#000"/><rect x="0" y="7" width="1" height="1" fill="#000"/><rect x="5" y="7" width="1" height="1" fill="#a0a0a0"/><rect x="9" y="7" width="1" height="1" fill="#000"/><rect x="14" y="7" width="1" height="1" fill="#000"/><rect x="0" y="8" width="1" height="1" fill="#000"/><rect x="5" y="8" width="1" height="1" fill="#a0a0a0"/><rect x="9" y="8" width="1" height="1" fill="#000"/><rect x="14" y="8" width="1" height="1" fill="#000"/><rect x="0" y="9" width="1" height="1" fill="#000"/><rect x="5" y="9" width="1" height="1" fill="#a0a0a0"/><rect x="9" y="9" width="1" height="1" fill="#000"/><rect x="14" y="9" width="1" height="1" fill="#000"/><rect x="0" y="10" width="1" height="1" fill="#000"/><rect x="3" y="10" width="2" height="1" fill="#a0a0a0"/><rect x="6" y="10" width="2" height="1" fill="#a0a0a0"/><rect x="9" y="10" width="1" height="1" fill="#000"/><rect x="14" y="10" width="1" height="1" fill="#000"/><rect x="0" y="11" width="2" height="1" fill="#000"/><rect x="2" y="11" width="1" height="1" fill="#a0a0a0"/><rect x="8" y="11" width="1" height="1" fill="#a0a0a0"/><rect x="9" y="11" width="1" height="1" fill="#000"/><rect x="14" y="11" width="1" height="1" fill="#000"/><rect x="2" y="12" width="2" height="1" fill="#000"/><rect x="9" y="12" width="1" height="1" fill="#000"/><rect x="10" y="12" width="2" height="1" fill="#a0a0a0"/><rect x="14" y="12" width="1" height="1" fill="#000"/><rect x="4" y="13" width="2" height="1" fill="#000"/><rect x="9" y="13" width="1" height="1" fill="#000"/><rect x="12" y="13" width="1" height="1" fill="#a0a0a0"/><rect x="13" y="13" width="2" height="1" fill="#000"/><rect x="6" y="14" width="2" height="1" fill="#000"/><rect x="9" y="14" width="1" height="1" fill="#000"/><rect x="11" y="14" width="2" height="1" fill="#000"/><rect x="8" y="15" width="3" height="1" fill="#000"/></svg>
<div style="left:731px;top:46px;width:21px;height:21px;background:#e4d0d0;border:1px solid #800000;box-shadow:inset 1px 1px 0 #f0e4e4"></div>
<div style="left:761px;top:46px;width:21px;height:21px;background:#e4d0d0;border:1px solid #800000;box-shadow:inset 1px 1px 0 #f0e4e4"></div>
<svg style="left:734px;top:49px" width="15" height="16" viewBox="0 0 15 16" shape-rendering="crispEdges"><rect x="4" y="0" width="3" height="1" fill="#00ffff"/><rect x="2" y="1" width="7" height="1" fill="#00ffff"/><rect x="1" y="2" width="1" height="1" fill="#6a96ff"/><rect x="2" y="2" width="9" height="1" fill="#00ffff"/><rect x="0" y="3" width="4" height="1" fill="#6a96ff"/><rect x="4" y="3" width="9" height="1" fill="#00ffff"/><rect x="0" y="4" width="6" height="1" fill="#6a96ff"/><rect x="6" y="4" width="7" height="1" fill="#00ffff"/><rect x="13" y="4" width="2" height="1" fill="#0030c8"/><rect x="0" y="5" width="8" height="1" fill="#6a96ff"/><rect x="8" y="5" width="3" height="1" fill="#00ffff"/><rect x="11" y="5" width="4" height="1" fill="#0030c8"/><rect x="0" y="6" width="10" height="1" fill="#6a96ff"/><rect x="10" y="6" width="5" height="1" fill="#0030c8"/><rect x="0" y="7" width="9" height="1" fill="#6a96ff"/><rect x="9" y="7" width="6" height="1" fill="#0030c8"/><rect x="0" y="8" width="9" height="1" fill="#6a96ff"/><rect x="9" y="8" width="6" height="1" fill="#0030c8"/><rect x="0" y="9" width="9" height="1" fill="#6a96ff"/><rect x="9" y="9" width="6" height="1" fill="#0030c8"/><rect x="0" y="10" width="9" height="1" fill="#6a96ff"/><rect x="9" y="10" width="6" height="1" fill="#0030c8"/><rect x="0" y="11" width="9" height="1" fill="#6a96ff"/><rect x="9" y="11" width="6" height="1" fill="#0030c8"/><rect x="2" y="12" width="7" height="1" fill="#6a96ff"/><rect x="9" y="12" width="6" height="1" fill="#0030c8"/><rect x="4" y="13" width="5" height="1" fill="#6a96ff"/><rect x="9" y="13" width="6" height="1" fill="#0030c8"/><rect x="6" y="14" width="3" height="1" fill="#6a96ff"/><rect x="9" y="14" width="4" height="1" fill="#0030c8"/><rect x="8" y="15" width="3" height="1" fill="#6a96ff"/></svg>
<svg style="left:764px;top:49px" width="15" height="16" viewBox="0 0 15 16" shape-rendering="crispEdges"><rect x="4" y="0" width="3" height="1" fill="#000"/><rect x="2" y="1" width="2" height="1" fill="#000"/><rect x="4" y="1" width="3" height="1" fill="#00ffff"/><rect x="7" y="1" width="2" height="1" fill="#000"/><rect x="0" y="2" width="2" height="1" fill="#000"/><rect x="2" y="2" width="7" height="1" fill="#00ffff"/><rect x="9" y="2" width="2" height="1" fill="#000"/><rect x="0" y="3" width="1" height="1" fill="#000"/><rect x="1" y="3" width="1" height="1" fill="#6a96ff"/><rect x="2" y="3" width="2" height="1" fill="#000"/><rect x="4" y="3" width="7" height="1" fill="#00ffff"/><rect x="11" y="3" width="2" height="1" fill="#000"/><rect x="0" y="4" width="1" height="1" fill="#000"/><rect x="1" y="4" width="3" height="1" fill="#6a96ff"/><rect x="4" y="4" width="2" height="1" fill="#000"/><rect x="6" y="4" width="7" height="1" fill="#00ffff"/><rect x="13" y="4" width="2" height="1" fill="#000"/><rect x="0" y="5" width="1" height="1" fill="#000"/><rect x="1" y="5" width="5" height="1" fill="#6a96ff"/><rect x="6" y="5" width="2" height="1" fill="#000"/><rect x="8" y="5" width="3" height="1" fill="#00ffff"/><rect x="11" y="5" width="2" height="1" fill="#000"/><rect x="13" y="5" width="1" height="1" fill="#0030c8"/><rect x="14" y="5" width="1" height="1" fill="#000"/><rect x="0" y="6" width="1" height="1" fill="#000"/><rect x="1" y="6" width="7" height="1" fill="#6a96ff"/><rect x="8" y="6" width="3" height="1" fill="#000"/><rect x="11" y="6" width="3" height="1" fill="#0030c8"/><rect x="14" y="6" width="1" height="1" fill="#000"/><rect x="0" y="7" width="1" height="1" fill="#000"/><rect x="1" y="7" width="8" height="1" fill="#6a96ff"/><rect x="9" y="7" width="1" height="1" fill="#000"/><rect x="10" y="7" width="4" height="1" fill="#0030c8"/><rect x="14" y="7" width="1" height="1" fill="#000"/><rect x="0" y="8" width="1" height="1" fill="#000"/><rect x="1" y="8" width="8" height="1" fill="#6a96ff"/><rect x="9" y="8" width="1" height="1" fill="#000"/><rect x="10" y="8" width="4" height="1" fill="#0030c8"/><rect x="14" y="8" width="1" height="1" fill="#000"/><rect x="0" y="9" width="1" height="1" fill="#000"/><rect x="1" y="9" width="8" height="1" fill="#6a96ff"/><rect x="9" y="9" width="1" height="1" fill="#000"/><rect x="10" y="9" width="4" height="1" fill="#0030c8"/><rect x="14" y="9" width="1" height="1" fill="#000"/><rect x="0" y="10" width="1" height="1" fill="#000"/><rect x="1" y="10" width="8" height="1" fill="#6a96ff"/><rect x="9" y="10" width="1" height="1" fill="#000"/><rect x="10" y="10" width="4" height="1" fill="#0030c8"/><rect x="14" y="10" width="1" height="1" fill="#000"/><rect x="0" y="11" width="2" height="1" fill="#000"/><rect x="2" y="11" width="7" height="1" fill="#6a96ff"/><rect x="9" y="11" width="1" height="1" fill="#000"/><rect x="10" y="11" width="4" height="1" fill="#0030c8"/><rect x="14" y="11" width="1" height="1" fill="#000"/><rect x="2" y="12" width="2" height="1" fill="#000"/><rect x="4" y="12" width="5" height="1" fill="#6a96ff"/><rect x="9" y="12" width="1" height="1" fill="#000"/><rect x="10" y="12" width="4" height="1" fill="#0030c8"/><rect x="14" y="12" width="1" height="1" fill="#000"/><rect x="4" y="13" width="2" height="1" fill="#000"/><rect x="6" y="13" width="3" height="1" fill="#6a96ff"/><rect x="9" y="13" width="1" height="1" fill="#000"/><rect x="10" y="13" width="3" height="1" fill="#0030c8"/><rect x="13" y="13" width="2" height="1" fill="#000"/><rect x="6" y="14" width="2" height="1" fill="#000"/><rect x="8" y="14" width="1" height="1" fill="#6a96ff"/><rect x="9" y="14" width="1" height="1" fill="#000"/><rect x="10" y="14" width="1" height="1" fill="#0030c8"/><rect x="11" y="14" width="2" height="1" fill="#000"/><rect x="8" y="15" width="3" height="1" fill="#000"/></svg>
<div style="left:757px;top:47px;width:1px;height:20px;background:#a0a0a0"></div>
<div style="left:787px;top:47px;width:1px;height:20px;background:#a0a0a0"></div>
<svg style="left:794px;top:49px" width="16" height="15" viewBox="0 0 16 15" shape-rendering="crispEdges"><rect x="9" y="0" width="6" height="1" fill="#00ffff"/><rect x="15" y="0" width="1" height="1" fill="#0030c8"/><rect x="7" y="1" width="7" height="1" fill="#00ffff"/><rect x="14" y="1" width="2" height="1" fill="#0030c8"/><rect x="5" y="2" width="8" height="1" fill="#00ffff"/><rect x="13" y="2" width="3" height="1" fill="#0030c8"/><rect x="3" y="3" width="9" height="1" fill="#00ffff"/><rect x="12" y="3" width="4" height="1" fill="#0030c8"/><rect x="1" y="4" width="10" height="1" fill="#00ffff"/><rect x="11" y="4" width="5" height="1" fill="#0030c8"/><rect x="0" y="5" width="10" height="1" fill="#6a96ff"/><rect x="10" y="5" width="5" height="1" fill="#0030c8"/><rect x="0" y="6" width="10" height="1" fill="#6a96ff"/><rect x="10" y="6" width="5" height="1" fill="#0030c8"/><rect x="0" y="7" width="10" height="1" fill="#6a96ff"/><rect x="10" y="7" width="4" height="1" fill="#0030c8"/><rect x="0" y="8" width="10" height="1" fill="#6a96ff"/><rect x="10" y="8" width="4" height="1" fill="#0030c8"/><rect x="0" y="9" width="10" height="1" fill="#6a96ff"/><rect x="10" y="9" width="3" height="1" fill="#0030c8"/><rect x="0" y="10" width="10" height="1" fill="#6a96ff"/><rect x="10" y="10" width="3" height="1" fill="#0030c8"/><rect x="0" y="11" width="10" height="1" fill="#6a96ff"/><rect x="10" y="11" width="2" height="1" fill="#0030c8"/><rect x="0" y="12" width="10" height="1" fill="#6a96ff"/><rect x="10" y="12" width="2" height="1" fill="#0030c8"/><rect x="0" y="13" width="11" height="1" fill="#6a96ff"/><rect x="11" y="13" width="1" height="1" fill="#0030c8"/><rect x="0" y="14" width="11" height="1" fill="#6a96ff"/><rect x="11" y="14" width="1" height="1" fill="#0030c8"/></svg>
<div style="left:817px;top:47px;width:1px;height:20px;background:#a0a0a0"></div>
<svg style="left:824px;top:49px" width="17" height="16" viewBox="0 0 17 16" shape-rendering="crispEdges"><path d="M2 4 H7 V2 Q9 0 13 1 Q16 3 15 7 Q14 10 11 10 Q13 12 11 14 H2 Z" fill="#808080" stroke="none" stroke-width="1" /><rect x="6" y="10" width="2" height="2" fill="#c8c8c8"/></svg>
<div style="left:847px;top:47px;width:1px;height:20px;background:#a0a0a0"></div>
<svg style="left:854px;top:49px" width="16" height="16" viewBox="0 0 16 16" shape-rendering="crispEdges"><rect x="0" y="0" width="16" height="1" fill="#000"/><rect x="0" y="1" width="2" height="1" fill="#000"/><rect x="5" y="1" width="1" height="1" fill="#000"/><rect x="6" y="1" width="1" height="1" fill="#fff"/><rect x="7" y="1" width="1" height="1" fill="#000"/><rect x="8" y="1" width="1" height="1" fill="#fff"/><rect x="9" y="1" width="1" height="1" fill="#000"/><rect x="10" y="1" width="2" height="1" fill="#fff"/><rect x="12" y="1" width="1" height="1" fill="#000"/><rect x="13" y="1" width="1" height="1" fill="#fff"/><rect x="14" y="1" width="2" height="1" fill="#000"/><rect x="1" y="2" width="1" height="1" fill="#000"/><rect x="9" y="2" width="1" height="1" fill="#000"/><rect x="10" y="2" width="1" height="1" fill="#fff"/><rect x="11" y="2" width="1" height="1" fill="#000"/><rect x="12" y="2" width="1" height="1" fill="#fff"/><rect x="13" y="2" width="1" height="1" fill="#000"/><rect x="1" y="3" width="1" height="1" fill="#000"/><rect x="9" y="3" width="2" height="1" fill="#000"/><rect x="11" y="3" width="1" height="1" fill="#fff"/><rect x="12" y="3" width="2" height="1" fill="#000"/><rect x="1" y="4" width="1" height="1" fill="#000"/><rect x="9" y="4" width="1" height="1" fill="#000"/><rect x="10" y="4" width="1" height="1" fill="#fff"/><rect x="11" y="4" width="1" height="1" fill="#000"/><rect x="12" y="4" width="1" height="1" fill="#fff"/><rect x="13" y="4" width="1" height="1" fill="#000"/><rect x="1" y="5" width="1" height="1" fill="#000"/><rect x="9" y="5" width="2" height="1" fill="#000"/><rect x="11" y="5" width="1" height="1" fill="#fff"/><rect x="12" y="5" width="2" height="1" fill="#000"/><rect x="1" y="6" width="1" height="1" fill="#000"/><rect x="9" y="6" width="1" height="1" fill="#000"/><rect x="10" y="6" width="1" height="1" fill="#fff"/><rect x="11" y="6" width="1" height="1" fill="#000"/><rect x="12" y="6" width="1" height="1" fill="#fff"/><rect x="13" y="6" width="1" height="1" fill="#000"/><rect x="0" y="7" width="3" height="1" fill="#000"/><rect x="9" y="7" width="2" height="1" fill="#000"/><rect x="11" y="7" width="1" height="1" fill="#fff"/><rect x="12" y="7" width="2" height="1" fill="#000"/><rect x="0" y="8" width="1" height="1" fill="#000"/><rect x="1" y="8" width="1" height="1" fill="#fff"/><rect x="3" y="8" width="1" height="1" fill="#000"/><rect x="9" y="8" width="1" height="1" fill="#000"/><rect x="10" y="8" width="1" height="1" fill="#fff"/><rect x="11" y="8" width="1" height="1" fill="#000"/><rect x="12" y="8" width="1" height="1" fill="#fff"/><rect x="13" y="8" width="1" height="1" fill="#000"/><rect x="0" y="9" width="1" height="1" fill="#000"/><rect x="3" y="9" width="1" height="1" fill="#000"/><rect x="9" y="9" width="2" height="1" fill="#000"/><rect x="11" y="9" width="1" height="1" fill="#fff"/><rect x="12" y="9" width="2" height="1" fill="#000"/><rect x="1" y="10" width="2" height="1" fill="#000"/><rect x="9" y="10" width="1" height="1" fill="#000"/><rect x="10" y="10" width="1" height="1" fill="#fff"/><rect x="11" y="10" width="1" height="1" fill="#000"/><rect x="12" y="10" width="1" height="1" fill="#fff"/><rect x="13" y="10" width="1" height="1" fill="#000"/><rect x="0" y="11" width="7" height="1" fill="#000"/><rect x="9" y="11" width="2" height="1" fill="#000"/><rect x="11" y="11" width="1" height="1" fill="#fff"/><rect x="12" y="11" width="2" height="1" fill="#000"/><rect x="0" y="12" width="1" height="1" fill="#000"/><rect x="1" y="12" width="2" height="1" fill="#fff"/><rect x="3" y="12" width="1" height="1" fill="#000"/><rect x="4" y="12" width="2" height="1" fill="#fff"/><rect x="6" y="12" width="1" height="1" fill="#000"/><rect x="9" y="12" width="1" height="1" fill="#000"/><rect x="10" y="12" width="1" height="1" fill="#fff"/><rect x="11" y="12" width="1" height="1" fill="#000"/><rect x="12" y="12" width="1" height="1" fill="#fff"/><rect x="13" y="12" width="1" height="1" fill="#000"/><rect x="0" y="13" width="7" height="1" fill="#000"/><rect x="9" y="13" width="2" height="1" fill="#000"/><rect x="11" y="13" width="1" height="1" fill="#fff"/><rect x="12" y="13" width="2" height="1" fill="#000"/><rect x="0" y="14" width="1" height="1" fill="#000"/><rect x="1" y="14" width="2" height="1" fill="#fff"/><rect x="3" y="14" width="1" height="1" fill="#000"/><rect x="4" y="14" width="2" height="1" fill="#fff"/><rect x="6" y="14" width="1" height="1" fill="#000"/><rect x="9" y="14" width="1" height="1" fill="#000"/><rect x="10" y="14" width="1" height="1" fill="#fff"/><rect x="11" y="14" width="1" height="1" fill="#000"/><rect x="12" y="14" width="1" height="1" fill="#fff"/><rect x="13" y="14" width="1" height="1" fill="#000"/><rect x="0" y="15" width="7" height="1" fill="#000"/><rect x="9" y="15" width="5" height="1" fill="#000"/></svg>
<svg style="left:876px;top:49px" width="17" height="16" viewBox="0 0 17 16"><path d="M4 1 Q1 3 3 6 Q5 9 2 12 L4 14" fill="none" stroke="#808080" stroke-width="1.4" /><path d="M7 14 L6 10 L14 1 L16 3 L9 13 Z" fill="#ffff00" stroke="#000" stroke-width="0.9" /><path d="M6 10 L9 13 L6 14 Z" fill="#ff8040" stroke="none" stroke-width="1" /></svg>
<svg style="left:898px;top:51px" width="17" height="12" viewBox="0 0 17 12" shape-rendering="crispEdges"><path d="M0.5 0.5 H15.5 V11.5 H0.5 Z" fill="none" stroke="#000" stroke-width="1" /><rect x="0" y="0" width="17" height="1" fill="#000"/><rect x="0" y="0" width="1" height="12" fill="#000"/><rect x="16" y="0" width="1" height="12" fill="#000"/><rect x="0" y="11" width="17" height="1" fill="#000"/><rect x="6" y="7" width="11" height="5" fill="#000"/><rect x="7" y="8" width="2" height="1" fill="#fff"/><rect x="10" y="8" width="5" height="1" fill="#fff"/><rect x="7" y="10" width="2" height="1" fill="#fff"/><rect x="10" y="10" width="3" height="1" fill="#fff"/></svg>
<svg style="left:920px;top:60px" width="5" height="3" viewBox="0 0 5 3" shape-rendering="crispEdges"><rect x="0" y="0" width="5" height="1" fill="#000"/><rect x="1" y="1" width="3" height="1" fill="#000"/><rect x="2" y="2" width="1" height="1" fill="#000"/></svg>
<svg style="left:3px;top:75px" width="3" height="16" viewBox="0 0 3 16" shape-rendering="crispEdges"><rect x="0" y="0" width="3" height="1" fill="#8c8c8c"/><rect x="0" y="2" width="3" height="1" fill="#8c8c8c"/><rect x="0" y="4" width="3" height="1" fill="#8c8c8c"/><rect x="0" y="6" width="3" height="1" fill="#8c8c8c"/><rect x="0" y="8" width="3" height="1" fill="#8c8c8c"/><rect x="0" y="10" width="3" height="1" fill="#8c8c8c"/><rect x="0" y="12" width="3" height="1" fill="#8c8c8c"/><rect x="0" y="14" width="3" height="1" fill="#8c8c8c"/></svg>
<svg style="left:13px;top:75px" width="17" height="16" viewBox="0 0 17 16" shape-rendering="crispEdges"><path d="M0 3.5 H7 M3.5 0 V7" fill="none" stroke="#808080" stroke-width="1" /><rect x="2" y="2" width="3" height="3" fill="#808080"/><rect x="3" y="3" width="1" height="1" fill="#c8c8c8"/><path d="M9 3.5 H16 M12.5 0 V7" fill="none" stroke="#808080" stroke-width="1" /><rect x="11" y="2" width="3" height="3" fill="#808080"/><rect x="12" y="3" width="1" height="1" fill="#c8c8c8"/><path d="M3.5 7 V15 M12.5 7 V15 M3.5 11.5 H12" fill="none" stroke="#808080" stroke-width="1" /><path d="M9 9 L12 11.5 L9 14 Z" fill="#808080" stroke="none" stroke-width="1" /></svg>
<div style="left:33px;top:73px;width:61px;height:20px;border:1px solid #808080"></div>
<div style="left:77px;top:74px;width:1px;height:18px;background:#808080"></div>
<svg style="left:82px;top:82px" width="5" height="3" viewBox="0 0 5 3" shape-rendering="crispEdges"><rect x="0" y="0" width="5" height="1" fill="#808080"/><rect x="1" y="1" width="3" height="1" fill="#808080"/><rect x="2" y="2" width="1" height="1" fill="#808080"/></svg>
<div style="left:98px;top:72px;width:1px;height:21px;background:#a0a0a0"></div>
<svg style="left:105px;top:76px" width="17" height="14" viewBox="0 0 17 14" shape-rendering="crispEdges"><path d="M1 4.5 L5 0.5 H16 L12 4.5 Z M1 8.5 L5 4.5 M12 8.5 L16 4.5 M1 8.5 H12 M1 12.5 L5 8.5 M12 12.5 L16 8.5 M1 12.5 H12 M1 6.5 H12 M1 10.5 H12" fill="none" stroke="#808080" stroke-width="1" /></svg>
<div style="left:125px;top:73px;width:48px;height:20px;border:1px solid #808080"></div>
<div style="left:157px;top:74px;width:1px;height:18px;background:#808080"></div>
<svg style="left:162px;top:82px" width="5" height="3" viewBox="0 0 5 3" shape-rendering="crispEdges"><rect x="0" y="0" width="5" height="1" fill="#808080"/><rect x="1" y="1" width="3" height="1" fill="#808080"/><rect x="2" y="2" width="1" height="1" fill="#808080"/></svg>
<div style="left:178px;top:72px;width:1px;height:21px;background:#a0a0a0"></div>
<svg style="left:185px;top:75px" width="16" height="15" viewBox="0 0 16 15" shape-rendering="crispEdges"><path d="M2.5 2 V13 H13.5 V8 H8.5 V2 H2.5" fill="none" stroke="#808080" stroke-width="1" /><rect x="1" y="1" width="3" height="3" fill="#808080"/><rect x="7" y="1" width="3" height="3" fill="#808080"/><rect x="7" y="7" width="3" height="3" fill="#808080"/><rect x="12" y="7" width="3" height="3" fill="#808080"/><rect x="1" y="12" width="3" height="3" fill="#808080"/><rect x="12" y="12" width="3" height="3" fill="#808080"/></svg>
<svg style="left:208px;top:75px" width="16" height="15" viewBox="0 0 16 15" shape-rendering="crispEdges"><path d="M0 4 L4 0 H15 V10 L11 15 H0 Z" fill="#808080" stroke="none" stroke-width="1" /></svg>
<div style="left:230px;top:72px;width:1px;height:21px;background:#a0a0a0"></div>
<svg style="left:237px;top:75px" width="17" height="16" viewBox="0 0 17 16"><path d="M1.8 8.8 L6.5 4 Q8.5 2 10.5 4 Q12.5 6 10.5 8 L5.8 12.8" fill="none" stroke="#808080" stroke-width="3.6" /><path d="M4.5 8.5 L7.5 5.5" fill="none" stroke="#b8b8b8" stroke-width="0.8" stroke-dasharray="1 1"/><rect x="8" y="13" width="2" height="2" fill="#808080"/><rect x="11" y="13" width="2" height="2" fill="#808080"/><rect x="14" y="13" width="2" height="2" fill="#808080"/></svg>
<svg style="left:258px;top:75px" width="18" height="17" viewBox="0 0 18 17"><path d="M6.8 8.8 L11.5 4 Q13.5 2 15.5 4 Q17.5 6 15.5 8 L10.8 12.8" fill="none" stroke="#808080" stroke-width="3.6" /><path d="M1 12.5 H8 M4.5 9 V16" fill="none" stroke="#808080" stroke-width="1" /><circle cx="4.5" cy="12.5" r="1.6" fill="#c8c8c8" stroke="#808080" stroke-width="1"/></svg>
<div style="left:282px;top:72px;width:1px;height:21px;background:#a0a0a0"></div>
<svg style="left:291px;top:76px" width="16" height="14" viewBox="0 0 16 14" shape-rendering="crispEdges"><path d="M3.5 0 V14 M7.5 0 V14 M11.5 0 V14 M0 2.5 H16 M0 6.5 H16 M0 10.5 H16" fill="none" stroke="#808080" stroke-width="1" /></svg>
<svg style="left:312px;top:82px" width="5" height="3" viewBox="0 0 5 3" shape-rendering="crispEdges"><rect x="0" y="0" width="5" height="1" fill="#808080"/><rect x="1" y="1" width="3" height="1" fill="#808080"/><rect x="2" y="2" width="1" height="1" fill="#808080"/></svg>
<div style="left:326px;top:72px;width:1px;height:21px;background:#a0a0a0"></div>
<svg style="left:333px;top:76px" width="16" height="14" viewBox="0 0 16 14" shape-rendering="crispEdges"><path d="M3.5 13 V1 M1 4 L3.5 1 L6 4 M3.5 11.5 H15 M12 9 L15 11.5 L12 14" fill="none" stroke="#808080" stroke-width="1" /><rect x="2" y="10" width="3" height="3" fill="#808080"/><rect x="3" y="11" width="1" height="1" fill="#c8c8c8"/></svg>
<div style="left:356px;top:72px;width:1px;height:21px;background:#a0a0a0"></div>
<svg style="left:365px;top:77px" width="12" height="12" viewBox="0 0 12 12" shape-rendering="crispEdges"><path d="M0 11.5 H4.5 V0.5 H12" fill="none" stroke="#808080" stroke-width="1" /></svg>
<svg style="left:385px;top:76px" width="17" height="15" viewBox="0 0 17 15" shape-rendering="crispEdges"><path d="M1 3.5 H8 M4.5 0 V7" fill="none" stroke="#808080" stroke-width="1" /><rect x="3" y="2" width="3" height="3" fill="#808080"/><rect x="4" y="3" width="1" height="1" fill="#c8c8c8"/><path d="M9 11.5 H16 M12.5 8 V15" fill="none" stroke="#808080" stroke-width="1" /><rect x="11" y="10" width="3" height="3" fill="#808080"/><rect x="12" y="11" width="1" height="1" fill="#c8c8c8"/><rect x="1" y="9" width="4" height="4" fill="#808080"/><rect x="2" y="10" width="2" height="2" fill="#c8c8c8"/><rect x="12" y="3" width="4" height="4" fill="#808080"/><rect x="13" y="4" width="2" height="2" fill="#c8c8c8"/><path d="M5 10 L12 6" fill="none" stroke="#808080" stroke-width="1" /></svg>
<div style="left:408px;top:72px;width:1px;height:21px;background:#a0a0a0"></div>
<svg style="left:415px;top:76px" width="16" height="16" viewBox="0 0 16 16"><path d="M1 0.5 L3.5 3 L6 0.5 M3.5 3 V6" fill="none" stroke="#808080" stroke-width="1" /><path d="M8 4.5 H15 M11.5 1 V8" fill="none" stroke="#808080" stroke-width="1" /><rect x="10" y="3" width="3" height="3" fill="#808080"/><rect x="11" y="4" width="1" height="1" fill="#c8c8c8"/><path d="M8 9 L13 14 M13 9 L8 14" fill="none" stroke="#808080" stroke-width="1" /></svg>
<div style="left:435px;top:73px;width:49px;height:20px;border:1px solid #808080"></div>
<div style="left:485px;top:73px;width:49px;height:20px;border:1px solid #808080"></div>
<svg style="left:537px;top:86px" width="5" height="3" viewBox="0 0 5 3" shape-rendering="crispEdges"><rect x="0" y="0" width="5" height="1" fill="#000"/><rect x="1" y="1" width="3" height="1" fill="#000"/><rect x="2" y="2" width="1" height="1" fill="#000"/></svg>
<div style="left:0px;top:97px;width:26px;height:500px;background:#c8c8c8"></div>
<svg style="left:5px;top:99px" width="16" height="3" viewBox="0 0 16 3" shape-rendering="crispEdges"><rect x="0" y="0" width="1" height="3" fill="#8c8c8c"/><rect x="2" y="0" width="1" height="3" fill="#8c8c8c"/><rect x="4" y="0" width="1" height="3" fill="#8c8c8c"/><rect x="6" y="0" width="1" height="3" fill="#8c8c8c"/><rect x="8" y="0" width="1" height="3" fill="#8c8c8c"/><rect x="10" y="0" width="1" height="3" fill="#8c8c8c"/><rect x="12" y="0" width="1" height="3" fill="#8c8c8c"/><rect x="14" y="0" width="1" height="3" fill="#8c8c8c"/></svg>
<svg style="left:3px;top:109px" width="3" height="10" viewBox="0 0 3 10" shape-rendering="crispEdges"><rect x="0" y="0" width="3" height="1" fill="#8c8c8c"/><rect x="0" y="2" width="3" height="1" fill="#8c8c8c"/><rect x="0" y="4" width="3" height="1" fill="#8c8c8c"/><rect x="0" y="6" width="3" height="1" fill="#8c8c8c"/><rect x="0" y="8" width="3" height="1" fill="#8c8c8c"/></svg>
<svg style="left:3px;top:127px" width="3" height="10" viewBox="0 0 3 10" shape-rendering="crispEdges"><rect x="0" y="0" width="3" height="1" fill="#8c8c8c"/><rect x="0" y="2" width="3" height="1" fill="#8c8c8c"/><rect x="0" y="4" width="3" height="1" fill="#8c8c8c"/><rect x="0" y="6" width="3" height="1" fill="#8c8c8c"/><rect x="0" y="8" width="3" height="1" fill="#8c8c8c"/></svg>
<svg style="left:3px;top:144px" width="3" height="10" viewBox="0 0 3 10" shape-rendering="crispEdges"><rect x="0" y="0" width="3" height="1" fill="#8c8c8c"/><rect x="0" y="2" width="3" height="1" fill="#8c8c8c"/><rect x="0" y="4" width="3" height="1" fill="#8c8c8c"/><rect x="0" y="6" width="3" height="1" fill="#8c8c8c"/><rect x="0" y="8" width="3" height="1" fill="#8c8c8c"/></svg>
<svg style="left:3px;top:161px" width="3" height="10" viewBox="0 0 3 10" shape-rendering="crispEdges"><rect x="0" y="0" width="3" height="1" fill="#8c8c8c"/><rect x="0" y="2" width="3" height="1" fill="#8c8c8c"/><rect x="0" y="4" width="3" height="1" fill="#8c8c8c"/><rect x="0" y="6" width="3" height="1" fill="#8c8c8c"/><rect x="0" y="8" width="3" height="1" fill="#8c8c8c"/></svg>
<svg style="left:3px;top:179px" width="3" height="10" viewBox="0 0 3 10" shape-rendering="crispEdges"><rect x="0" y="0" width="3" height="1" fill="#8c8c8c"/><rect x="0" y="2" width="3" height="1" fill="#8c8c8c"/><rect x="0" y="4" width="3" height="1" fill="#8c8c8c"/><rect x="0" y="6" width="3" height="1" fill="#8c8c8c"/><rect x="0" y="8" width="3" height="1" fill="#8c8c8c"/></svg>
<svg style="left:3px;top:196px" width="3" height="10" viewBox="0 0 3 10" shape-rendering="crispEdges"><rect x="0" y="0" width="3" height="1" fill="#8c8c8c"/><rect x="0" y="2" width="3" height="1" fill="#8c8c8c"/><rect x="0" y="4" width="3" height="1" fill="#8c8c8c"/><rect x="0" y="6" width="3" height="1" fill="#8c8c8c"/><rect x="0" y="8" width="3" height="1" fill="#8c8c8c"/></svg>
<svg style="left:3px;top:213px" width="3" height="10" viewBox="0 0 3 10" shape-rendering="crispEdges"><rect x="0" y="0" width="3" height="1" fill="#8c8c8c"/><rect x="0" y="2" width="3" height="1" fill="#8c8c8c"/><rect x="0" y="4" width="3" height="1" fill="#8c8c8c"/><rect x="0" y="6" width="3" height="1" fill="#8c8c8c"/><rect x="0" y="8" width="3" height="1" fill="#8c8c8c"/></svg>
<svg style="left:3px;top:230px" width="3" height="10" viewBox="0 0 3 10" shape-rendering="crispEdges"><rect x="0" y="0" width="3" height="1" fill="#8c8c8c"/><rect x="0" y="2" width="3" height="1" fill="#8c8c8c"/><rect x="0" y="4" width="3" height="1" fill="#8c8c8c"/><rect x="0" y="6" width="3" height="1" fill="#8c8c8c"/><rect x="0" y="8" width="3" height="1" fill="#8c8c8c"/></svg>
<svg style="left:3px;top:247px" width="3" height="10" viewBox="0 0 3 10" shape-rendering="crispEdges"><rect x="0" y="0" width="3" height="1" fill="#8c8c8c"/><rect x="0" y="2" width="3" height="1" fill="#8c8c8c"/><rect x="0" y="4" width="3" height="1" fill="#8c8c8c"/><rect x="0" y="6" width="3" height="1" fill="#8c8c8c"/><rect x="0" y="8" width="3" height="1" fill="#8c8c8c"/></svg>
<div style="left:7px;top:106px;width:16px;height:16px;background:#e4d0d0;border:1px solid #800000"></div>
<svg style="left:9px;top:108px" width="12" height="12" viewBox="0 0 12 12" shape-rendering="crispEdges"><path d="M0 2 L3 0 L11 3 V10 L8 12 L0 9 Z" fill="#6a8cff" stroke="none" stroke-width="1" /><path d="M0 2 L3 0 L11 3 L8 5 Z" fill="#00ffff" stroke="none" stroke-width="1" /><path d="M8 5 L11 3 V10 L8 12 Z" fill="#0030d0" stroke="none" stroke-width="1" /></svg>
<svg style="left:12px;top:125px" width="8" height="13" viewBox="0 0 8 13"><path d="M0.5 0.5 Q4 1 4 3 Q3.5 5 1.5 6 Q0.5 8 2 9 Q4 10 6.5 11.5" fill="none" stroke="#000" stroke-width="1.3" /></svg>
<svg style="left:8px;top:140px" width="15" height="15" viewBox="0 0 15 15"><g transform="rotate(-40 7.5 7.5)"><defs><linearGradient id="spg" x1="0" y1="0" x2="0" y2="1"><stop offset="0" stop-color="#0000a0"/><stop offset="0.45" stop-color="#60a0ff"/><stop offset="1" stop-color="#0000a0"/></linearGradient></defs><path d="M2.5 4 H6.5 L7.5 5.5 L8.5 4 H12.5 V11 H8.5 L7.5 9.5 L6.5 11 H2.5 Z" fill="url(#spg)" stroke="#000090" stroke-width="1" /></g></svg>
<svg style="left:8px;top:158px" width="15" height="15" viewBox="0 0 15 15"><path d="M1 5 L6 6.5 L9.5 1 L14 5.5 L12.5 9.5 L8.5 11 Z" fill="#00ffff" stroke="#0000e0" stroke-width="1.1" /><path d="M1 1 L13.5 13.5" fill="none" stroke="#000080" stroke-width="1.3" /></svg>
<svg style="left:8px;top:176px" width="14" height="13" viewBox="0 0 14 13"><path d="M1.5 12 L7 2.5 L12.5 12" fill="none" stroke="#000" stroke-width="2.8" /><path d="M2.5 10.5 L7 3 L11.5 10.5" fill="none" stroke="#f0f0e0" stroke-width="0.9" /><circle cx="7" cy="2.2" r="1.8" fill="#fff" stroke="#000" stroke-width="1.1"/></svg>
<svg style="left:9px;top:193px" width="12" height="12" viewBox="0 0 12 12" shape-rendering="crispEdges"><path d="M0 0 H12 L7 6 V9 H5 V6 Z" fill="#0080ff" stroke="none" stroke-width="1" /><path d="M0 0.5 H12" fill="none" stroke="#0000c0" stroke-width="1" /><rect x="5" y="9" width="2" height="3" fill="#ff0000"/><rect x="5" y="10" width="2" height="1" fill="#ffff00"/></svg>
<svg style="left:10px;top:210px" width="11" height="12" viewBox="0 0 11 12" shape-rendering="crispEdges"><rect x="0" y="0" width="7" height="1" fill="#000"/><rect x="0" y="1" width="1" height="1" fill="#000"/><rect x="1" y="1" width="1" height="1" fill="#fff"/><rect x="2" y="1" width="1" height="1" fill="#909090"/><rect x="3" y="1" width="1" height="1" fill="#fff"/><rect x="4" y="1" width="1" height="1" fill="#909090"/><rect x="5" y="1" width="1" height="1" fill="#fff"/><rect x="6" y="1" width="2" height="1" fill="#000"/><rect x="0" y="2" width="1" height="1" fill="#000"/><rect x="1" y="2" width="5" height="1" fill="#909090"/><rect x="6" y="2" width="1" height="1" fill="#000"/><rect x="7" y="2" width="1" height="1" fill="#fff"/><rect x="8" y="2" width="1" height="1" fill="#000"/><rect x="0" y="3" width="1" height="1" fill="#000"/><rect x="1" y="3" width="1" height="1" fill="#fff"/><rect x="2" y="3" width="1" height="1" fill="#909090"/><rect x="3" y="3" width="1" height="1" fill="#fff"/><rect x="4" y="3" width="1" height="1" fill="#909090"/><rect x="5" y="3" width="1" height="1" fill="#fff"/><rect x="6" y="3" width="4" height="1" fill="#000"/><rect x="0" y="4" width="1" height="1" fill="#000"/><rect x="1" y="4" width="8" height="1" fill="#909090"/><rect x="9" y="4" width="1" height="1" fill="#000"/><rect x="0" y="5" width="1" height="1" fill="#000"/><rect x="1" y="5" width="1" height="1" fill="#fff"/><rect x="2" y="5" width="1" height="1" fill="#909090"/><rect x="3" y="5" width="1" height="1" fill="#fff"/><rect x="4" y="5" width="1" height="1" fill="#909090"/><rect x="5" y="5" width="2" height="1" fill="#fff"/><rect x="7" y="5" width="1" height="1" fill="#909090"/><rect x="8" y="5" width="1" height="1" fill="#fff"/><rect x="9" y="5" width="1" height="1" fill="#000"/><rect x="0" y="6" width="1" height="1" fill="#000"/><rect x="1" y="6" width="8" height="1" fill="#909090"/><rect x="9" y="6" width="1" height="1" fill="#000"/><rect x="0" y="7" width="1" height="1" fill="#000"/><rect x="1" y="7" width="1" height="1" fill="#fff"/><rect x="2" y="7" width="1" height="1" fill="#909090"/><rect x="3" y="7" width="1" height="1" fill="#fff"/><rect x="4" y="7" width="1" height="1" fill="#909090"/><rect x="5" y="7" width="2" height="1" fill="#fff"/><rect x="7" y="7" width="1" height="1" fill="#909090"/><rect x="8" y="7" width="1" height="1" fill="#fff"/><rect x="9" y="7" width="1" height="1" fill="#000"/><rect x="0" y="8" width="10" height="1" fill="#000"/><rect x="0" y="9" width="1" height="1" fill="#000"/><rect x="1" y="9" width="2" height="1" fill="#fff"/><rect x="3" y="9" width="1" height="1" fill="#000"/><rect x="4" y="9" width="2" height="1" fill="#fff"/><rect x="6" y="9" width="1" height="1" fill="#000"/><rect x="7" y="9" width="2" height="1" fill="#fff"/><rect x="9" y="9" width="1" height="1" fill="#000"/><rect x="0" y="10" width="1" height="1" fill="#000"/><rect x="1" y="10" width="2" height="1" fill="#fff"/><rect x="3" y="10" width="1" height="1" fill="#000"/><rect x="4" y="10" width="2" height="1" fill="#fff"/><rect x="6" y="10" width="1" height="1" fill="#000"/><rect x="7" y="10" width="2" height="1" fill="#fff"/><rect x="9" y="10" width="1" height="1" fill="#000"/><rect x="0" y="11" width="10" height="1" fill="#000"/></svg>
<svg style="left:9px;top:226px" width="13" height="14" viewBox="0 0 13 14"><path d="M6 5 V2 Q6 1 8 1 H12" fill="none" stroke="#000" stroke-width="1.5" /><path d="M2 6 H10 Q12 6 12 9 Q12 12 10 12 H2 Z" fill="#2060ff" stroke="#0000c0" stroke-width="1" /><ellipse cx="2.5" cy="9" rx="2" ry="3" fill="#00ffff" stroke="#0000c0"/></svg>
<svg style="left:9px;top:244px" width="13" height="13" viewBox="0 0 13 13"><path d="M1 0.5 H5 V8 H12 V12.5 H3 L1 10 Z" fill="#00c0ff" stroke="#0000c0" stroke-width="1.2" /><path d="M3 2 V10 H11" fill="none" stroke="#0000ff" stroke-width="1.5" /></svg>
<div style="left:2px;top:263px;width:23px;height:1px;background:#a0a0a0"></div>
<svg style="left:3px;top:270px" width="16" height="16" viewBox="0 0 16 16" shape-rendering="crispEdges"><path d="M0 3 L3 0 H16 V12 L13 15 H0 Z" fill="#808080" stroke="none" stroke-width="1" /></svg>
<svg style="left:17px;top:282px" width="5" height="5" viewBox="0 0 5 5" shape-rendering="crispEdges"><path d="M5 0 V5 H0 Z" fill="#000" stroke="none" stroke-width="1" /></svg>
<svg style="left:5px;top:292px" width="16" height="16" viewBox="0 0 16 16" shape-rendering="crispEdges"><path d="M0 4 L4 0 H16 V11 L12 15 H0 Z" fill="#808080" stroke="none" stroke-width="1" /></svg>
<svg style="left:3px;top:314px" width="16" height="16" viewBox="0 0 16 16" shape-rendering="crispEdges"><path d="M2 3 L5 0 H16 V11 L12 14 H6 L3 15 H0 Z" fill="#808080" stroke="none" stroke-width="1" /></svg>
<svg style="left:17px;top:326px" width="5" height="5" viewBox="0 0 5 5" shape-rendering="crispEdges"><path d="M5 0 V5 H0 Z" fill="#000" stroke="none" stroke-width="1" /></svg>
<svg style="left:3px;top:336px" width="16" height="16" viewBox="0 0 16 16" shape-rendering="crispEdges"><path d="M0 2 L2 0 H16 V12 L13 15 H0 Z" fill="#808080" stroke="none" stroke-width="1" /><rect x="6" y="6" width="4" height="3" fill="#c8c8c8"/></svg>
<svg style="left:17px;top:348px" width="5" height="5" viewBox="0 0 5 5" shape-rendering="crispEdges"><path d="M5 0 V5 H0 Z" fill="#000" stroke="none" stroke-width="1" /></svg>
<svg style="left:3px;top:358px" width="17" height="16" viewBox="0 0 17 16"><path d="M0.5 3 L3 0.5 H10 L15.5 5.5 V11 L12.5 14.5 H0.5 Z" fill="#000080" stroke="none" stroke-width="1" /><path d="M1.2 3.2 H8.5 L11.2 6.8 V13.8 H1.2 Z" fill="#6a96ff" stroke="none" stroke-width="1" /><path d="M1.5 2.5 L3.3 1.2 H9.3 L8 2.5 Z" fill="#0000ff" stroke="none" stroke-width="1" /><path d="M9.2 2.4 L10.4 1.2 L15 5.4 L13.2 7 Z" fill="#00ffff" stroke="none" stroke-width="1" /><path d="M11.8 7.5 L14.8 6 V10.8 L12 13.8 Z" fill="#0030d0" stroke="none" stroke-width="1" /></svg>
<svg style="left:17px;top:370px" width="5" height="5" viewBox="0 0 5 5" shape-rendering="crispEdges"><path d="M5 0 V5 H0 Z" fill="#000" stroke="none" stroke-width="1" /></svg>
<svg style="left:5px;top:380px" width="16" height="16" viewBox="0 0 16 16" shape-rendering="crispEdges"><path d="M0 2 L2 0 H16 V12 L13 15 H0 Z" fill="#808080" stroke="none" stroke-width="1" /><path d="M6 6 L8 7 L7 9 Z" fill="#c8c8c8" stroke="none" stroke-width="1" /></svg>
<svg style="left:5px;top:402px" width="16" height="16" viewBox="0 0 16 16" shape-rendering="crispEdges"><path d="M4 3 L7 0 H16 V11 L13 15 H0 L3 10 Z" fill="#808080" stroke="none" stroke-width="1" /></svg>
<svg style="left:5px;top:425px" width="17" height="15" viewBox="0 0 17 15"><path d="M0.5 13.5 L5.5 0.5 H12 L16 7 L12 13.5 Z" fill="#000080" stroke="none" stroke-width="1" /><path d="M1.5 12.8 L6 1.5 H11.2 V12.8 Z" fill="#6a96ff" stroke="none" stroke-width="1" /><path d="M6 1.4 H11.2 V2.4 H5.6 Z" fill="#00ffff" stroke="none" stroke-width="1" /><path d="M12 2 L15 7 L12 12 Z" fill="#0030d0" stroke="none" stroke-width="1" /></svg>
<svg style="left:5px;top:446px" width="17" height="16" viewBox="0 0 17 16"><path d="M0.5 3.5 L3.5 0.5 H15.5 V11.5 L12.5 15.5 H0.5 Z" fill="#000080" stroke="none" stroke-width="1" /><path d="M1.5 3 L3.8 1.2 H14.5 L12 3 Z" fill="#00ffff" stroke="none" stroke-width="1" /><rect x="1" y="4" width="11" height="11" fill="#6a96ff"/><path d="M12.5 4 L15 1.8 V11 L12.5 14 Z" fill="#0030d0" stroke="none" stroke-width="1" /><rect x="3" y="6" width="7" height="7" fill="#000080"/><rect x="4" y="7" width="5" height="5" fill="#6a96ff"/><rect x="5" y="8" width="1" height="3" fill="#000080"/><rect x="5" y="10" width="4" height="1" fill="#000080"/><rect x="7" y="8" width="2" height="1" fill="#000080"/></svg>
<svg style="left:3px;top:469px" width="17" height="16" viewBox="0 0 17 16"><path d="M0.5 6 L6 0.5 L15.5 9.5 L10 15.5 H0.5 Z" fill="#000080" stroke="none" stroke-width="1" /><path d="M1.5 6.5 L6 1.8 L14 9.5 L10 14.5 H1.5 Z" fill="#00ffff" stroke="none" stroke-width="1" /><path d="M1.5 8 L6 8 L9 11 L6 14.5 H1.5 Z" fill="#6a96ff" stroke="none" stroke-width="1" /><path d="M3 7 L7.5 3 L12 8 L8 12 Z" fill="#0030d0" stroke="none" stroke-width="1" /><rect x="6" y="7" width="2" height="2" fill="#6a96ff"/></svg>
<svg style="left:17px;top:481px" width="5" height="5" viewBox="0 0 5 5" shape-rendering="crispEdges"><path d="M5 0 V5 H0 Z" fill="#000" stroke="none" stroke-width="1" /></svg>
<svg style="left:3px;top:490px" width="17" height="16" viewBox="0 0 17 16"><path d="M0.5 3.5 L3 0.5 H16 V13.5 L13.5 15.5 H0.5 Z" fill="#000080" stroke="none" stroke-width="1" /><rect x="1" y="3" width="13" height="12" fill="#00ffff"/><path d="M3 1.2 H15 V2.5 H2 Z" fill="#6a96ff" stroke="none" stroke-width="1" /><rect x="2" y="4" width="3" height="3" fill="#000080"/><rect x="3" y="5" width="1" height="1" fill="#0030ff"/><rect x="2" y="8" width="3" height="3" fill="#000080"/><rect x="3" y="9" width="1" height="1" fill="#0030ff"/><rect x="2" y="12" width="3" height="3" fill="#000080"/><rect x="3" y="13" width="1" height="1" fill="#0030ff"/><rect x="6" y="4" width="3" height="3" fill="#000080"/><rect x="7" y="5" width="1" height="1" fill="#0030ff"/><rect x="6" y="8" width="3" height="3" fill="#000080"/><rect x="7" y="9" width="1" height="1" fill="#0030ff"/><rect x="6" y="12" width="3" height="3" fill="#000080"/><rect x="7" y="13" width="1" height="1" fill="#0030ff"/><rect x="10" y="4" width="3" height="3" fill="#000080"/><rect x="11" y="5" width="1" height="1" fill="#0030ff"/><rect x="10" y="8" width="3" height="3" fill="#000080"/><rect x="11" y="9" width="1" height="1" fill="#0030ff"/><rect x="10" y="12" width="3" height="3" fill="#000080"/><rect x="11" y="13" width="1" height="1" fill="#0030ff"/></svg>
<svg style="left:17px;top:503px" width="5" height="5" viewBox="0 0 5 5" shape-rendering="crispEdges"><path d="M5 0 V5 H0 Z" fill="#000" stroke="none" stroke-width="1" /></svg>
<svg style="left:3px;top:512px" width="17" height="16" viewBox="0 0 17 16"><path d="M0.5 12 L3 9.5 H4 V4 L6 1.5 H15.5 V9 L13 12 L11 14.5 H0.5 Z" fill="#000080" stroke="none" stroke-width="1" /><rect x="5" y="3" width="4" height="5" fill="#00c0ff"/><rect x="11" y="3" width="4" height="5" fill="#00c0ff"/><rect x="2" y="11" width="10" height="2" fill="#6a96ff"/><path d="M7.5 14 Q8 7 13 1.5" fill="none" stroke="#ff2000" stroke-width="2.4" /><path d="M8.6 12.5 Q9.2 7.5 12.5 3.5" fill="none" stroke="#ffd000" stroke-width="0.8" /></svg>
<svg style="left:17px;top:525px" width="5" height="5" viewBox="0 0 5 5" shape-rendering="crispEdges"><path d="M5 0 V5 H0 Z" fill="#000" stroke="none" stroke-width="1" /></svg>
<svg style="left:3px;top:535px" width="16" height="16" viewBox="0 0 16 16" shape-rendering="crispEdges"><path d="M0 4 L4 0 H15 V11 L11 15 H0 Z" fill="#808080" stroke="none" stroke-width="1" /><path d="M5 4 H14 V11 H5 Z M4 4 L0 8" fill="none" stroke="#b8b8b8" stroke-width="0.8" /></svg>
<svg style="left:17px;top:547px" width="5" height="5" viewBox="0 0 5 5" shape-rendering="crispEdges"><path d="M5 0 V5 H0 Z" fill="#000" stroke="none" stroke-width="1" /></svg>
<div style="left:2px;top:557px;width:23px;height:1px;background:#a0a0a0"></div>
<svg style="left:5px;top:563px" width="16" height="17" viewBox="0 0 16 17"><path d="M6 3 L9 0 H16 V8 L13 10 H8 V4 Z" fill="#808080" stroke="none" stroke-width="1" /><path d="M1.5 6.5 H8.5 V16.5 H1.5 Z M4.5 9.5 H13.5 V13.5 H4.5 Z M5 1 L5 6" fill="none" stroke="#808080" stroke-width="1" /></svg>
<svg style="left:9px;top:585px" width="3" height="5" viewBox="0 0 3 5" shape-rendering="crispEdges"><path d="M3 0 V5 L0 2.5 Z" fill="#000" stroke="none" stroke-width="1" /></svg>
<div style="left:26px;top:96px;width:200px;height:1px;background:#a0a0a0"></div>
<div style="left:26px;top:97px;width:200px;height:20px;background:#c0c0c0;border-left:1px solid #808080;border-right:1px solid #808080;border-bottom:1px solid #808080"></div>
<span style="left:30px;top:101px;font-size:12px;line-height:normal;color:#000;font-family:'Liberation Sans',sans-serif;font-weight:normal;letter-spacing:0.45px;white-space:pre;">Дерево построения</span>
<svg style="left:199px;top:104px" width="7" height="8" viewBox="0 0 7 8" shape-rendering="crispEdges"><rect x="1" y="0" width="5" height="1" fill="#000"/><rect x="1" y="1" width="1" height="1" fill="#000"/><rect x="3" y="1" width="1" height="1" fill="#e0e0e0"/><rect x="4" y="1" width="2" height="1" fill="#000"/><rect x="1" y="2" width="1" height="1" fill="#000"/><rect x="3" y="2" width="1" height="1" fill="#e0e0e0"/><rect x="4" y="2" width="2" height="1" fill="#000"/><rect x="1" y="3" width="1" height="1" fill="#000"/><rect x="3" y="3" width="1" height="1" fill="#e0e0e0"/><rect x="4" y="3" width="2" height="1" fill="#000"/><rect x="1" y="4" width="5" height="1" fill="#000"/><rect x="0" y="5" width="7" height="1" fill="#000"/><rect x="3" y="6" width="1" height="1" fill="#000"/><rect x="3" y="7" width="1" height="1" fill="#000"/></svg>
<svg style="left:213px;top:104px" width="9" height="8" viewBox="0 0 9 8" shape-rendering="crispEdges"><rect x="0" y="0" width="2" height="1" fill="#000"/><rect x="7" y="0" width="2" height="1" fill="#000"/><rect x="1" y="1" width="2" height="1" fill="#000"/><rect x="6" y="1" width="2" height="1" fill="#000"/><rect x="2" y="2" width="2" height="1" fill="#000"/><rect x="5" y="2" width="2" height="1" fill="#000"/><rect x="3" y="3" width="3" height="1" fill="#000"/><rect x="3" y="4" width="3" height="1" fill="#000"/><rect x="2" y="5" width="2" height="1" fill="#000"/><rect x="5" y="5" width="2" height="1" fill="#000"/><rect x="1" y="6" width="2" height="1" fill="#000"/><rect x="6" y="6" width="2" height="1" fill="#000"/><rect x="0" y="7" width="2" height="1" fill="#000"/><rect x="7" y="7" width="2" height="1" fill="#000"/></svg>
<div style="left:26px;top:119px;width:200px;height:512px;background:#c0c0c0;border-left:1px solid #808080;border-top:1px solid #808080;border-right:1px solid #c0c0c0"></div>
<div style="left:27px;top:120px;width:198px;height:3px;background:#c0c0c0"></div>
<div style="left:30px;top:123px;width:192px;height:490px;background:#fff"></div>
<div style="left:222px;top:120px;width:3px;height:511px;background:#c8c8c8"></div>
<div style="left:225px;top:119px;width:1px;height:512px;background:#909090"></div>
<div style="left:40px;top:143px;width:1px;height:1px;background:#808080"></div>
<div style="left:40px;top:145px;width:1px;height:1px;background:#808080"></div>
<div style="left:40px;top:147px;width:1px;height:1px;background:#808080"></div>
<div style="left:40px;top:149px;width:1px;height:1px;background:#808080"></div>
<div style="left:40px;top:151px;width:1px;height:1px;background:#808080"></div>
<div style="left:40px;top:153px;width:1px;height:1px;background:#808080"></div>
<div style="left:40px;top:155px;width:1px;height:1px;background:#808080"></div>
<div style="left:40px;top:157px;width:1px;height:1px;background:#808080"></div>
<div style="left:40px;top:159px;width:1px;height:1px;background:#808080"></div>
<div style="left:40px;top:161px;width:1px;height:1px;background:#808080"></div>
<div style="left:40px;top:163px;width:1px;height:1px;background:#808080"></div>
<div style="left:40px;top:165px;width:1px;height:1px;background:#808080"></div>
<div style="left:40px;top:167px;width:1px;height:1px;background:#808080"></div>
<div style="left:40px;top:169px;width:1px;height:1px;background:#808080"></div>
<div style="left:40px;top:171px;width:1px;height:1px;background:#808080"></div>
<div style="left:40px;top:173px;width:1px;height:1px;background:#808080"></div>
<div style="left:40px;top:175px;width:1px;height:1px;background:#808080"></div>
<div style="left:40px;top:177px;width:1px;height:1px;background:#808080"></div>
<div style="left:40px;top:179px;width:1px;height:1px;background:#808080"></div>
<div style="left:40px;top:181px;width:1px;height:1px;background:#808080"></div>
<div style="left:40px;top:183px;width:1px;height:1px;background:#808080"></div>
<div style="left:40px;top:185px;width:1px;height:1px;background:#808080"></div>
<div style="left:40px;top:187px;width:1px;height:1px;background:#808080"></div>
<div style="left:40px;top:189px;width:1px;height:1px;background:#808080"></div>
<div style="left:40px;top:191px;width:1px;height:1px;background:#808080"></div>
<div style="left:40px;top:193px;width:1px;height:1px;background:#808080"></div>
<div style="left:40px;top:195px;width:1px;height:1px;background:#808080"></div>
<div style="left:40px;top:197px;width:1px;height:1px;background:#808080"></div>
<div style="left:40px;top:199px;width:1px;height:1px;background:#808080"></div>
<div style="left:40px;top:201px;width:1px;height:1px;background:#808080"></div>
<div style="left:40px;top:203px;width:1px;height:1px;background:#808080"></div>
<div style="left:40px;top:205px;width:1px;height:1px;background:#808080"></div>
<div style="left:40px;top:207px;width:1px;height:1px;background:#808080"></div>
<div style="left:40px;top:209px;width:1px;height:1px;background:#808080"></div>
<div style="left:40px;top:211px;width:1px;height:1px;background:#808080"></div>
<div style="left:40px;top:213px;width:1px;height:1px;background:#808080"></div>
<div style="left:40px;top:215px;width:1px;height:1px;background:#808080"></div>
<div style="left:40px;top:217px;width:1px;height:1px;background:#808080"></div>
<div style="left:40px;top:219px;width:1px;height:1px;background:#808080"></div>
<div style="left:40px;top:221px;width:1px;height:1px;background:#808080"></div>
<div style="left:40px;top:223px;width:1px;height:1px;background:#808080"></div>
<div style="left:40px;top:225px;width:1px;height:1px;background:#808080"></div>
<div style="left:40px;top:227px;width:1px;height:1px;background:#808080"></div>
<div style="left:42px;top:153px;width:1px;height:1px;background:#808080"></div>
<div style="left:44px;top:153px;width:1px;height:1px;background:#808080"></div>
<div style="left:46px;top:153px;width:1px;height:1px;background:#808080"></div>
<div style="left:48px;top:153px;width:1px;height:1px;background:#808080"></div>
<div style="left:50px;top:153px;width:1px;height:1px;background:#808080"></div>
<div style="left:52px;top:153px;width:1px;height:1px;background:#808080"></div>
<div style="left:42px;top:173px;width:1px;height:1px;background:#808080"></div>
<div style="left:44px;top:173px;width:1px;height:1px;background:#808080"></div>
<div style="left:46px;top:173px;width:1px;height:1px;background:#808080"></div>
<div style="left:48px;top:173px;width:1px;height:1px;background:#808080"></div>
<div style="left:50px;top:173px;width:1px;height:1px;background:#808080"></div>
<div style="left:52px;top:173px;width:1px;height:1px;background:#808080"></div>
<div style="left:42px;top:193px;width:1px;height:1px;background:#808080"></div>
<div style="left:44px;top:193px;width:1px;height:1px;background:#808080"></div>
<div style="left:46px;top:193px;width:1px;height:1px;background:#808080"></div>
<div style="left:48px;top:193px;width:1px;height:1px;background:#808080"></div>
<div style="left:50px;top:193px;width:1px;height:1px;background:#808080"></div>
<div style="left:52px;top:193px;width:1px;height:1px;background:#808080"></div>
<div style="left:42px;top:213px;width:1px;height:1px;background:#808080"></div>
<div style="left:44px;top:213px;width:1px;height:1px;background:#808080"></div>
<div style="left:46px;top:213px;width:1px;height:1px;background:#808080"></div>
<div style="left:48px;top:213px;width:1px;height:1px;background:#808080"></div>
<div style="left:50px;top:213px;width:1px;height:1px;background:#808080"></div>
<div style="left:52px;top:213px;width:1px;height:1px;background:#808080"></div>
<div style="left:47px;top:233px;width:1px;height:1px;background:#808080"></div>
<div style="left:49px;top:233px;width:1px;height:1px;background:#808080"></div>
<div style="left:51px;top:233px;width:1px;height:1px;background:#808080"></div>
<div style="left:53px;top:233px;width:1px;height:1px;background:#808080"></div>
<div style="left:63px;top:241px;width:1px;height:1px;background:#808080"></div>
<div style="left:63px;top:243px;width:1px;height:1px;background:#808080"></div>
<div style="left:63px;top:245px;width:1px;height:1px;background:#808080"></div>
<div style="left:63px;top:247px;width:1px;height:1px;background:#808080"></div>
<div style="left:63px;top:249px;width:1px;height:1px;background:#808080"></div>
<div style="left:63px;top:251px;width:1px;height:1px;background:#808080"></div>
<div style="left:63px;top:253px;width:1px;height:1px;background:#808080"></div>
<div style="left:65px;top:253px;width:1px;height:1px;background:#808080"></div>
<div style="left:67px;top:253px;width:1px;height:1px;background:#808080"></div>
<div style="left:69px;top:253px;width:1px;height:1px;background:#808080"></div>
<div style="left:71px;top:253px;width:1px;height:1px;background:#808080"></div>
<div style="left:73px;top:253px;width:1px;height:1px;background:#808080"></div>
<div style="left:75px;top:253px;width:1px;height:1px;background:#808080"></div>
<div style="left:77px;top:253px;width:1px;height:1px;background:#808080"></div>
<svg style="left:32px;top:125px" width="16" height="16" viewBox="0 0 16 16" shape-rendering="crispEdges"><rect x="3" y="0" width="8" height="1" fill="#000080"/><rect x="2" y="1" width="1" height="1" fill="#000080"/><rect x="3" y="1" width="7" height="1" fill="#0000ff"/><rect x="10" y="1" width="1" height="1" fill="#000080"/><rect x="11" y="1" width="1" height="1" fill="#00ffff"/><rect x="12" y="1" width="1" height="1" fill="#000080"/><rect x="1" y="2" width="1" height="1" fill="#000080"/><rect x="2" y="2" width="8" height="1" fill="#0000ff"/><rect x="10" y="2" width="1" height="1" fill="#000080"/><rect x="11" y="2" width="2" height="1" fill="#00ffff"/><rect x="13" y="2" width="1" height="1" fill="#000080"/><rect x="0" y="3" width="1" height="1" fill="#000080"/><rect x="1" y="3" width="8" height="1" fill="#0000ff"/><rect x="9" y="3" width="1" height="1" fill="#000080"/><rect x="10" y="3" width="4" height="1" fill="#00ffff"/><rect x="14" y="3" width="1" height="1" fill="#000080"/><rect x="0" y="4" width="1" height="1" fill="#000080"/><rect x="1" y="4" width="8" height="1" fill="#00ffff"/><rect x="9" y="4" width="1" height="1" fill="#000080"/><rect x="10" y="4" width="5" height="1" fill="#00ffff"/><rect x="15" y="4" width="1" height="1" fill="#000080"/><rect x="0" y="5" width="1" height="1" fill="#000080"/><rect x="1" y="5" width="9" height="1" fill="#00ffff"/><rect x="10" y="5" width="1" height="1" fill="#000080"/><rect x="11" y="5" width="4" height="1" fill="#00ffff"/><rect x="15" y="5" width="1" height="1" fill="#000080"/><rect x="0" y="6" width="1" height="1" fill="#000080"/><rect x="1" y="6" width="3" height="1" fill="#00ffff"/><rect x="4" y="6" width="4" height="1" fill="#000080"/><rect x="8" y="6" width="3" height="1" fill="#00ffff"/><rect x="11" y="6" width="1" height="1" fill="#000080"/><rect x="12" y="6" width="2" height="1" fill="#00ffff"/><rect x="14" y="6" width="2" height="1" fill="#000080"/><rect x="0" y="7" width="1" height="1" fill="#000080"/><rect x="1" y="7" width="2" height="1" fill="#00ffff"/><rect x="3" y="7" width="7" height="1" fill="#000080"/><rect x="10" y="7" width="2" height="1" fill="#00ffff"/><rect x="12" y="7" width="1" height="1" fill="#000080"/><rect x="13" y="7" width="1" height="1" fill="#00ffff"/><rect x="14" y="7" width="2" height="1" fill="#000080"/><rect x="0" y="8" width="1" height="1" fill="#000080"/><rect x="1" y="8" width="1" height="1" fill="#00ffff"/><rect x="2" y="8" width="4" height="1" fill="#000080"/><rect x="6" y="8" width="2" height="1" fill="#ffffff"/><rect x="8" y="8" width="3" height="1" fill="#000080"/><rect x="11" y="8" width="1" height="1" fill="#00ffff"/><rect x="12" y="8" width="4" height="1" fill="#000080"/><rect x="0" y="9" width="1" height="1" fill="#000080"/><rect x="1" y="9" width="1" height="1" fill="#00ffff"/><rect x="2" y="9" width="4" height="1" fill="#000080"/><rect x="6" y="9" width="3" height="1" fill="#ffffff"/><rect x="9" y="9" width="2" height="1" fill="#000080"/><rect x="11" y="9" width="1" height="1" fill="#00ffff"/><rect x="12" y="9" width="4" height="1" fill="#000080"/><rect x="0" y="10" width="1" height="1" fill="#000080"/><rect x="1" y="10" width="1" height="1" fill="#00ffff"/><rect x="2" y="10" width="5" height="1" fill="#000080"/><rect x="7" y="10" width="2" height="1" fill="#ffffff"/><rect x="9" y="10" width="2" height="1" fill="#000080"/><rect x="11" y="10" width="1" height="1" fill="#00ffff"/><rect x="12" y="10" width="4" height="1" fill="#000080"/><rect x="0" y="11" width="1" height="1" fill="#000080"/><rect x="1" y="11" width="1" height="1" fill="#00ffff"/><rect x="2" y="11" width="1" height="1" fill="#000080"/><rect x="3" y="11" width="3" height="1" fill="#0000ff"/><rect x="6" y="11" width="4" height="1" fill="#000080"/><rect x="10" y="11" width="2" height="1" fill="#00ffff"/><rect x="12" y="11" width="4" height="1" fill="#000080"/><rect x="0" y="12" width="1" height="1" fill="#000080"/><rect x="1" y="12" width="2" height="1" fill="#00ffff"/><rect x="3" y="12" width="1" height="1" fill="#000080"/><rect x="4" y="12" width="4" height="1" fill="#0000ff"/><rect x="8" y="12" width="2" height="1" fill="#000080"/><rect x="10" y="12" width="2" height="1" fill="#00ffff"/><rect x="12" y="12" width="3" height="1" fill="#000080"/><rect x="0" y="13" width="1" height="1" fill="#000080"/><rect x="1" y="13" width="3" height="1" fill="#00ffff"/><rect x="4" y="13" width="4" height="1" fill="#000080"/><rect x="8" y="13" width="4" height="1" fill="#00ffff"/><rect x="12" y="13" width="2" height="1" fill="#000080"/><rect x="0" y="14" width="1" height="1" fill="#000080"/><rect x="1" y="14" width="10" height="1" fill="#00ffff"/><rect x="11" y="14" width="2" height="1" fill="#000080"/><rect x="0" y="15" width="12" height="1" fill="#000080"/></svg>
<span style="left:56px;top:126px;font-size:11px;line-height:normal;color:#000;font-family:'Liberation Sans',sans-serif;font-weight:normal;letter-spacing:0.2px;white-space:pre;">Деталь</span>
<svg style="left:54px;top:145px" width="17" height="17" viewBox="0 0 17 17" shape-rendering="crispEdges"><rect x="8" y="0" width="1" height="1" fill="#808080"/><rect x="8" y="1" width="1" height="1" fill="#808080"/><rect x="2" y="2" width="4" height="1" fill="#808080"/><rect x="8" y="2" width="1" height="1" fill="#808080"/><rect x="2" y="3" width="1" height="1" fill="#808080"/><rect x="3" y="3" width="3" height="1" fill="#808000"/><rect x="6" y="3" width="5" height="1" fill="#808080"/><rect x="2" y="4" width="1" height="1" fill="#808080"/><rect x="3" y="4" width="5" height="1" fill="#808000"/><rect x="8" y="4" width="1" height="1" fill="#808080"/><rect x="9" y="4" width="2" height="1" fill="#808000"/><rect x="11" y="4" width="4" height="1" fill="#808080"/><rect x="2" y="5" width="1" height="1" fill="#808080"/><rect x="3" y="5" width="5" height="1" fill="#808000"/><rect x="8" y="5" width="1" height="1" fill="#808080"/><rect x="9" y="5" width="5" height="1" fill="#808000"/><rect x="14" y="5" width="1" height="1" fill="#808080"/><rect x="2" y="6" width="1" height="1" fill="#808080"/><rect x="3" y="6" width="5" height="1" fill="#808000"/><rect x="8" y="6" width="1" height="1" fill="#808080"/><rect x="9" y="6" width="5" height="1" fill="#808000"/><rect x="14" y="6" width="1" height="1" fill="#808080"/><rect x="0" y="7" width="6" height="1" fill="#808080"/><rect x="6" y="7" width="2" height="1" fill="#808000"/><rect x="8" y="7" width="1" height="1" fill="#808080"/><rect x="9" y="7" width="5" height="1" fill="#808000"/><rect x="14" y="7" width="1" height="1" fill="#808080"/><rect x="2" y="8" width="1" height="1" fill="#808080"/><rect x="3" y="8" width="3" height="1" fill="#808000"/><rect x="6" y="8" width="5" height="1" fill="#808080"/><rect x="11" y="8" width="3" height="1" fill="#808000"/><rect x="14" y="8" width="1" height="1" fill="#808080"/><rect x="2" y="9" width="1" height="1" fill="#808080"/><rect x="3" y="9" width="5" height="1" fill="#808000"/><rect x="8" y="9" width="1" height="1" fill="#808080"/><rect x="9" y="9" width="2" height="1" fill="#808000"/><rect x="11" y="9" width="6" height="1" fill="#808080"/><rect x="2" y="10" width="1" height="1" fill="#808080"/><rect x="3" y="10" width="5" height="1" fill="#808000"/><rect x="8" y="10" width="1" height="1" fill="#808080"/><rect x="9" y="10" width="5" height="1" fill="#808000"/><rect x="14" y="10" width="1" height="1" fill="#808080"/><rect x="2" y="11" width="1" height="1" fill="#808080"/><rect x="3" y="11" width="5" height="1" fill="#808000"/><rect x="8" y="11" width="1" height="1" fill="#808080"/><rect x="9" y="11" width="5" height="1" fill="#808000"/><rect x="14" y="11" width="1" height="1" fill="#808080"/><rect x="2" y="12" width="4" height="1" fill="#808080"/><rect x="6" y="12" width="2" height="1" fill="#808000"/><rect x="8" y="12" width="1" height="1" fill="#808080"/><rect x="9" y="12" width="5" height="1" fill="#808000"/><rect x="14" y="12" width="1" height="1" fill="#808080"/><rect x="6" y="13" width="5" height="1" fill="#808080"/><rect x="11" y="13" width="3" height="1" fill="#808000"/><rect x="14" y="13" width="1" height="1" fill="#808080"/><rect x="8" y="14" width="1" height="1" fill="#808080"/><rect x="11" y="14" width="4" height="1" fill="#808080"/><rect x="8" y="15" width="1" height="1" fill="#808080"/><rect x="8" y="16" width="1" height="1" fill="#808080"/></svg>
<svg style="left:54px;top:165px" width="17" height="17" viewBox="0 0 17 17" shape-rendering="crispEdges"><rect x="8" y="0" width="1" height="1" fill="#808080"/><rect x="8" y="1" width="1" height="1" fill="#808080"/><rect x="2" y="2" width="4" height="1" fill="#808080"/><rect x="8" y="2" width="1" height="1" fill="#808080"/><rect x="2" y="3" width="1" height="1" fill="#808080"/><rect x="3" y="3" width="3" height="1" fill="#808000"/><rect x="6" y="3" width="5" height="1" fill="#808080"/><rect x="2" y="4" width="1" height="1" fill="#808080"/><rect x="3" y="4" width="5" height="1" fill="#808000"/><rect x="8" y="4" width="1" height="1" fill="#808080"/><rect x="9" y="4" width="2" height="1" fill="#808000"/><rect x="11" y="4" width="4" height="1" fill="#808080"/><rect x="2" y="5" width="1" height="1" fill="#808080"/><rect x="3" y="5" width="5" height="1" fill="#808000"/><rect x="8" y="5" width="1" height="1" fill="#808080"/><rect x="9" y="5" width="5" height="1" fill="#808000"/><rect x="14" y="5" width="1" height="1" fill="#808080"/><rect x="2" y="6" width="1" height="1" fill="#808080"/><rect x="3" y="6" width="5" height="1" fill="#808000"/><rect x="8" y="6" width="1" height="1" fill="#808080"/><rect x="9" y="6" width="5" height="1" fill="#808000"/><rect x="14" y="6" width="1" height="1" fill="#808080"/><rect x="0" y="7" width="6" height="1" fill="#808080"/><rect x="6" y="7" width="2" height="1" fill="#808000"/><rect x="8" y="7" width="1" height="1" fill="#808080"/><rect x="9" y="7" width="5" height="1" fill="#808000"/><rect x="14" y="7" width="1" height="1" fill="#808080"/><rect x="2" y="8" width="1" height="1" fill="#808080"/><rect x="3" y="8" width="3" height="1" fill="#808000"/><rect x="6" y="8" width="5" height="1" fill="#808080"/><rect x="11" y="8" width="3" height="1" fill="#808000"/><rect x="14" y="8" width="1" height="1" fill="#808080"/><rect x="2" y="9" width="1" height="1" fill="#808080"/><rect x="3" y="9" width="5" height="1" fill="#808000"/><rect x="8" y="9" width="1" height="1" fill="#808080"/><rect x="9" y="9" width="2" height="1" fill="#808000"/><rect x="11" y="9" width="6" height="1" fill="#808080"/><rect x="2" y="10" width="1" height="1" fill="#808080"/><rect x="3" y="10" width="5" height="1" fill="#808000"/><rect x="8" y="10" width="1" height="1" fill="#808080"/><rect x="9" y="10" width="5" height="1" fill="#808000"/><rect x="14" y="10" width="1" height="1" fill="#808080"/><rect x="2" y="11" width="1" height="1" fill="#808080"/><rect x="3" y="11" width="5" height="1" fill="#808000"/><rect x="8" y="11" width="1" height="1" fill="#808080"/><rect x="9" y="11" width="5" height="1" fill="#808000"/><rect x="14" y="11" width="1" height="1" fill="#808080"/><rect x="2" y="12" width="4" height="1" fill="#808080"/><rect x="6" y="12" width="2" height="1" fill="#808000"/><rect x="8" y="12" width="1" height="1" fill="#808080"/><rect x="9" y="12" width="5" height="1" fill="#808000"/><rect x="14" y="12" width="1" height="1" fill="#808080"/><rect x="6" y="13" width="5" height="1" fill="#808080"/><rect x="11" y="13" width="3" height="1" fill="#808000"/><rect x="14" y="13" width="1" height="1" fill="#808080"/><rect x="8" y="14" width="1" height="1" fill="#808080"/><rect x="11" y="14" width="4" height="1" fill="#808080"/><rect x="8" y="15" width="1" height="1" fill="#808080"/><rect x="8" y="16" width="1" height="1" fill="#808080"/></svg>
<svg style="left:54px;top:185px" width="17" height="17" viewBox="0 0 17 17" shape-rendering="crispEdges"><rect x="8" y="0" width="1" height="1" fill="#808080"/><rect x="8" y="1" width="1" height="1" fill="#808080"/><rect x="2" y="2" width="4" height="1" fill="#808080"/><rect x="8" y="2" width="1" height="1" fill="#808080"/><rect x="2" y="3" width="1" height="1" fill="#808080"/><rect x="3" y="3" width="3" height="1" fill="#808000"/><rect x="6" y="3" width="5" height="1" fill="#808080"/><rect x="2" y="4" width="1" height="1" fill="#808080"/><rect x="3" y="4" width="5" height="1" fill="#808000"/><rect x="8" y="4" width="1" height="1" fill="#808080"/><rect x="9" y="4" width="2" height="1" fill="#808000"/><rect x="11" y="4" width="4" height="1" fill="#808080"/><rect x="2" y="5" width="1" height="1" fill="#808080"/><rect x="3" y="5" width="5" height="1" fill="#808000"/><rect x="8" y="5" width="1" height="1" fill="#808080"/><rect x="9" y="5" width="5" height="1" fill="#808000"/><rect x="14" y="5" width="1" height="1" fill="#808080"/><rect x="2" y="6" width="1" height="1" fill="#808080"/><rect x="3" y="6" width="5" height="1" fill="#808000"/><rect x="8" y="6" width="1" height="1" fill="#808080"/><rect x="9" y="6" width="5" height="1" fill="#808000"/><rect x="14" y="6" width="1" height="1" fill="#808080"/><rect x="0" y="7" width="6" height="1" fill="#808080"/><rect x="6" y="7" width="2" height="1" fill="#808000"/><rect x="8" y="7" width="1" height="1" fill="#808080"/><rect x="9" y="7" width="5" height="1" fill="#808000"/><rect x="14" y="7" width="1" height="1" fill="#808080"/><rect x="2" y="8" width="1" height="1" fill="#808080"/><rect x="3" y="8" width="3" height="1" fill="#808000"/><rect x="6" y="8" width="5" height="1" fill="#808080"/><rect x="11" y="8" width="3" height="1" fill="#808000"/><rect x="14" y="8" width="1" height="1" fill="#808080"/><rect x="2" y="9" width="1" height="1" fill="#808080"/><rect x="3" y="9" width="5" height="1" fill="#808000"/><rect x="8" y="9" width="1" height="1" fill="#808080"/><rect x="9" y="9" width="2" height="1" fill="#808000"/><rect x="11" y="9" width="6" height="1" fill="#808080"/><rect x="2" y="10" width="1" height="1" fill="#808080"/><rect x="3" y="10" width="5" height="1" fill="#808000"/><rect x="8" y="10" width="1" height="1" fill="#808080"/><rect x="9" y="10" width="5" height="1" fill="#808000"/><rect x="14" y="10" width="1" height="1" fill="#808080"/><rect x="2" y="11" width="1" height="1" fill="#808080"/><rect x="3" y="11" width="5" height="1" fill="#808000"/><rect x="8" y="11" width="1" height="1" fill="#808080"/><rect x="9" y="11" width="5" height="1" fill="#808000"/><rect x="14" y="11" width="1" height="1" fill="#808080"/><rect x="2" y="12" width="4" height="1" fill="#808080"/><rect x="6" y="12" width="2" height="1" fill="#808000"/><rect x="8" y="12" width="1" height="1" fill="#808080"/><rect x="9" y="12" width="5" height="1" fill="#808000"/><rect x="14" y="12" width="1" height="1" fill="#808080"/><rect x="6" y="13" width="5" height="1" fill="#808080"/><rect x="11" y="13" width="3" height="1" fill="#808000"/><rect x="14" y="13" width="1" height="1" fill="#808080"/><rect x="8" y="14" width="1" height="1" fill="#808080"/><rect x="11" y="14" width="4" height="1" fill="#808080"/><rect x="8" y="15" width="1" height="1" fill="#808080"/><rect x="8" y="16" width="1" height="1" fill="#808080"/></svg>
<span style="left:81px;top:147px;font-size:11px;line-height:normal;color:#000;font-family:'Liberation Sans',sans-serif;font-weight:normal;letter-spacing:-0.05px;white-space:pre;">Плоскость XY</span>
<span style="left:81px;top:167px;font-size:11px;line-height:normal;color:#000;font-family:'Liberation Sans',sans-serif;font-weight:normal;letter-spacing:-0.05px;white-space:pre;">Плоскость ZX</span>
<span style="left:81px;top:187px;font-size:11px;line-height:normal;color:#000;font-family:'Liberation Sans',sans-serif;font-weight:normal;letter-spacing:-0.05px;white-space:pre;">Плоскость ZY</span>
<svg style="left:53px;top:204px" width="20" height="19" viewBox="0 0 20 19"><path d="M9.5 11 V2 M9.5 11 H17 M9.5 11 L2 18" fill="none" stroke="#000080" stroke-width="1.5" /><path d="M9.5 0 L12 5 H7 Z M19 11 L15 8.5 V13.5 Z M1 19 L2.5 14 L6 17 Z" fill="#000080" stroke="none" stroke-width="1" /></svg>
<span style="left:81px;top:207px;font-size:11px;line-height:normal;color:#000;font-family:'Liberation Sans',sans-serif;font-weight:normal;letter-spacing:-0.12px;white-space:pre;">Начало координат</span>
<div style="left:35px;top:228px;width:11px;height:11px;background:#fff;border:1px solid #808080"></div>
<div style="left:37px;top:233px;width:7px;height:1px;background:#000"></div>
<svg style="left:55px;top:225px" width="17" height="15" viewBox="0 0 17 15" shape-rendering="crispEdges"><path d="M0 4 L4 0 H16 V11 L12 15 H0 Z" fill="#0000ff" stroke="none" stroke-width="1" /><path d="M0 4 L4 0 H16 L12 4 Z" fill="#00ffff" stroke="none" stroke-width="1" /><path d="M12 4 L16 0 V11 L12 15 Z" fill="#0000a0" stroke="none" stroke-width="1" /><path d="M0 4 H12 V15" fill="none" stroke="#000080" stroke-width="0.6" /></svg>
<span style="left:81px;top:227px;font-size:11px;line-height:normal;color:#000;font-family:'Liberation Sans',sans-serif;font-weight:normal;letter-spacing:-0.02px;white-space:pre;">Операция выдавливания:1</span>
<svg style="left:77px;top:244px" width="18" height="17" viewBox="0 0 18 17" shape-rendering="crispEdges"><path d="M2.5 2 V15.5 H15.5 V9.5 H9.5 V2 Z" fill="none" stroke="#808080" stroke-width="1" /><rect x="1" y="1" width="3" height="3" fill="#00a0a0"/><rect x="8" y="1" width="3" height="3" fill="#00a0a0"/><rect x="8" y="8" width="3" height="3" fill="#00a0a0"/><rect x="14" y="8" width="3" height="3" fill="#00a0a0"/><rect x="1" y="14" width="3" height="3" fill="#00a0a0"/><rect x="14" y="14" width="3" height="3" fill="#00a0a0"/><rect x="2" y="2" width="1" height="1" fill="#c0ffff"/><rect x="9" y="2" width="1" height="1" fill="#c0ffff"/><rect x="9" y="9" width="1" height="1" fill="#c0ffff"/><rect x="15" y="9" width="1" height="1" fill="#c0ffff"/><rect x="2" y="15" width="1" height="1" fill="#c0ffff"/><rect x="15" y="15" width="1" height="1" fill="#c0ffff"/></svg>
<span style="left:103px;top:247px;font-size:11px;line-height:normal;color:#000;font-family:'Liberation Sans',sans-serif;font-weight:normal;letter-spacing:0.45px;white-space:pre;">Эскиз:1</span>
<div style="left:35px;top:261px;width:183px;height:1px;background:#000"></div>
<div style="left:35px;top:264px;width:183px;height:1px;background:#000"></div>
<div style="left:35px;top:262px;width:183px;height:1px;background:#fff"></div>
<div style="left:35px;top:263px;width:183px;height:1px;background:#a8a8a8"></div>
<div style="left:34px;top:262px;width:1px;height:2px;background:#000"></div>
<div style="left:218px;top:262px;width:1px;height:2px;background:#000"></div>
<div style="left:30px;top:613px;width:193px;height:13px;background:#c0c0c0"></div>
<div style="left:30px;top:613px;width:13px;height:12px;background:#c0c0c0;border-top:1px solid #dcdcdc;border-left:1px solid #dcdcdc;border-right:1px solid #000;border-bottom:1px solid #000;box-shadow:inset 1px 1px 0 #fff,inset -1px -1px 0 #808080"></div>
<svg style="left:34px;top:616px" width="3" height="6" viewBox="0 0 3 6" shape-rendering="crispEdges"><path d="M3 0 V6 L0 3 Z" fill="#000" stroke="none" stroke-width="1" /></svg>
<div style="left:43px;top:613px;width:162px;height:12px;background:#c0c0c0;border-top:1px solid #dcdcdc;border-left:1px solid #dcdcdc;border-right:1px solid #000;border-bottom:1px solid #000;box-shadow:inset 1px 1px 0 #fff,inset -1px -1px 0 #808080"></div>
<div style="left:205px;top:613px;width:4px;height:12px;background:repeating-conic-gradient(#fff 0 25%,#c0c0c0 0 50%) 0 0/2px 2px"></div>
<div style="left:209px;top:613px;width:13px;height:12px;background:#c0c0c0;border-top:1px solid #dcdcdc;border-left:1px solid #dcdcdc;border-right:1px solid #000;border-bottom:1px solid #000;box-shadow:inset 1px 1px 0 #fff,inset -1px -1px 0 #808080"></div>
<svg style="left:214px;top:616px" width="3" height="6" viewBox="0 0 3 6" shape-rendering="crispEdges"><path d="M0 0 V6 L3 3 Z" fill="#000" stroke="none" stroke-width="1" /></svg>
<div style="left:30px;top:625px;width:193px;height:1px;background:#000"></div>
<div style="left:26px;top:631px;width:200px;height:23px;background:#e0e0e0"></div>
<div style="left:26px;top:631px;width:4px;height:1px;background:#000"></div>
<div style="left:110px;top:631px;width:116px;height:1px;background:#000"></div>
<div style="left:30px;top:631px;width:81px;height:23px;background:#c0c0c0;border-right:1px solid #000;border-bottom:1px solid #000"></div>
<span style="left:34px;top:636px;font-size:12px;line-height:normal;color:#000;font-family:'Liberation Sans',sans-serif;font-weight:normal;letter-spacing:0.25px;white-space:pre;">Построение</span>
<svg style="left:199px;top:638px" width="7" height="10" viewBox="0 0 7 10"><path d="M6 0.5 V9.5 L0.5 5 Z" fill="none" stroke="#909090" stroke-width="1" /></svg>
<svg style="left:213px;top:638px" width="7" height="10" viewBox="0 0 7 10"><path d="M0.5 0.5 V9.5 L6 5 Z" fill="none" stroke="#909090" stroke-width="1" /></svg>
<div style="left:230px;top:96px;width:794px;height:559px;background:#fff;border-left:1px solid #808080;border-top:1px solid #808080;border-right:1px solid #fff;border-bottom:1px solid #fff"></div>
<div style="left:231px;top:97px;width:792px;height:557px;border-left:1px solid #000;border-top:1px solid #000;border-right:1px solid #c0c0c0;border-bottom:1px solid #c0c0c0"></div>
<svg style="left:0;top:0" width="1024" height="768" viewBox="0 0 1024 768"><path d="M573.5 205.5 L840.5 359.5 L680.5 452.5 L413.5 298.5 Z" fill="#b1b0ba" stroke="none" stroke-width="1" /><path d="M413.5 298.5 L680.5 452.5 L680.5 545.5 L413.5 391.5 Z" fill="#908f99" stroke="none" stroke-width="1" /><path d="M680.5 452.5 L840.5 359.5 L840.5 452.5 L680.5 545.5 Z" fill="#5b5b61" stroke="none" stroke-width="1" /><path d="M573.5 205.5 L840.5 359.5 L840.5 452.5 L680.5 545.5 L413.5 391.5 L413.5 298.5 Z M413.5 298.5 L680.5 452.5 L840.5 359.5 M680.5 452.5 L680.5 545.5" fill="none" stroke="#000" stroke-width="1" shape-rendering="crispEdges"/><path d="M627.5 422.5 V387 M627.5 422.5 L658 440 M627.5 422.5 L597 440" fill="none" stroke="#ff7878" stroke-width="1" /><path d="M627.5 388 L625.5 395 H629.5 Z" fill="none" stroke="#ff7878" stroke-width="1" /><path d="M658 440 L650.5 438 L653 433.5 Z" fill="none" stroke="#ff7878" stroke-width="1" /><path d="M597 440 L604.5 438 L602 433.5 Z" fill="none" stroke="#ff7878" stroke-width="1" /><path d="M627.5 376 L631.5 380 L635.5 376 M631.5 380 V384" fill="none" stroke="#ff7878" stroke-width="1.3" /><path d="M658.5 430 L667 439 M667 430 L658.5 439" fill="none" stroke="#ff7878" stroke-width="1.3" /><path d="M595 429.5 H604 L596 439 L603 437" fill="none" stroke="#ff7878" stroke-width="1.3" /></svg>
<svg style="left:27px;top:664px" width="3" height="48" viewBox="0 0 3 48" shape-rendering="crispEdges"><rect x="0" y="0" width="3" height="1" fill="#8c8c8c"/><rect x="0" y="2" width="3" height="1" fill="#8c8c8c"/><rect x="0" y="4" width="3" height="1" fill="#8c8c8c"/><rect x="0" y="6" width="3" height="1" fill="#8c8c8c"/><rect x="0" y="8" width="3" height="1" fill="#8c8c8c"/><rect x="0" y="10" width="3" height="1" fill="#8c8c8c"/><rect x="0" y="12" width="3" height="1" fill="#8c8c8c"/><rect x="0" y="14" width="3" height="1" fill="#8c8c8c"/><rect x="0" y="16" width="3" height="1" fill="#8c8c8c"/><rect x="0" y="18" width="3" height="1" fill="#8c8c8c"/><rect x="0" y="20" width="3" height="1" fill="#8c8c8c"/><rect x="0" y="22" width="3" height="1" fill="#8c8c8c"/><rect x="0" y="24" width="3" height="1" fill="#8c8c8c"/><rect x="0" y="26" width="3" height="1" fill="#8c8c8c"/><rect x="0" y="28" width="3" height="1" fill="#8c8c8c"/><rect x="0" y="30" width="3" height="1" fill="#8c8c8c"/><rect x="0" y="32" width="3" height="1" fill="#8c8c8c"/><rect x="0" y="34" width="3" height="1" fill="#8c8c8c"/><rect x="0" y="36" width="3" height="1" fill="#8c8c8c"/><rect x="0" y="38" width="3" height="1" fill="#8c8c8c"/><rect x="0" y="40" width="3" height="1" fill="#8c8c8c"/><rect x="0" y="42" width="3" height="1" fill="#8c8c8c"/><rect x="0" y="44" width="3" height="1" fill="#8c8c8c"/><rect x="0" y="46" width="3" height="1" fill="#8c8c8c"/></svg>
<div style="left:32px;top:662px;width:986px;height:30px;border-top:1px solid #808080;border-left:1px solid #808080;border-right:1px solid #808080;border-bottom:1px solid #000"></div>
<svg style="left:40px;top:698px" width="4" height="7" viewBox="0 0 4 7" shape-rendering="crispEdges"><rect x="3" y="0" width="1" height="1" fill="#000"/><rect x="2" y="1" width="2" height="1" fill="#000"/><rect x="1" y="2" width="3" height="1" fill="#000"/><rect x="0" y="3" width="4" height="1" fill="#000"/><rect x="1" y="4" width="3" height="1" fill="#000"/><rect x="2" y="5" width="2" height="1" fill="#000"/><rect x="3" y="6" width="1" height="1" fill="#000"/></svg>
<svg style="left:54px;top:698px" width="4" height="7" viewBox="0 0 4 7" shape-rendering="crispEdges"><rect x="0" y="0" width="1" height="1" fill="#000"/><rect x="0" y="1" width="2" height="1" fill="#000"/><rect x="0" y="2" width="3" height="1" fill="#000"/><rect x="0" y="3" width="4" height="1" fill="#000"/><rect x="0" y="4" width="3" height="1" fill="#000"/><rect x="0" y="5" width="2" height="1" fill="#000"/><rect x="0" y="6" width="1" height="1" fill="#000"/></svg>
<div style="left:4px;top:718px;width:934px;height:20px;border:1px solid #808080"></div>
<div style="left:940px;top:718px;width:84px;height:20px;border:1px solid #808080"></div>
<span style="left:6px;top:721px;font-size:13px;line-height:normal;color:#000;font-family:'Liberation Sans',sans-serif;font-weight:normal;letter-spacing:-0.08px;white-space:pre;">Щелкните левой кнопкой мыши на объекте для его выделения (вместе с Ctrl - добавить к выделенным)</span>
<div style="left:0px;top:739px;width:1024px;height:1px;background:#ffffff"></div>
<div style="left:2px;top:742px;width:58px;height:23px;background:#c0c0c0;border-top:1px solid #fff;border-left:1px solid #fff;border-right:1px solid #000;border-bottom:1px solid #000;box-shadow:inset -1px -1px 0 #808080"></div>
<svg style="left:4px;top:745px" width="17" height="16" viewBox="0 0 17 16"><g transform="scale(0.9)"><path d="M1 3 Q4 1 8 3 L7 8 Q4 6 0 8 Z" fill="#f04020" stroke="none" stroke-width="1" /><path d="M9 3 Q12 5 16 3 L15 8 Q12 10 8 8 Z" fill="#40b030" stroke="none" stroke-width="1" /><path d="M0 9 Q4 7 7 9 L6 14 Q3 12 -1 14 Z" fill="#3070e0" stroke="none" stroke-width="1" /><path d="M8 9 Q11 11 15 9 L14 14 Q11 16 7 14 Z" fill="#f0c020" stroke="none" stroke-width="1" /></g></svg>
<span style="left:23px;top:745px;font-size:15px;line-height:normal;color:#000;font-family:'Liberation Serif',serif;font-weight:bold;letter-spacing:-0.15px;white-space:pre;">Пуск</span>
<svg style="left:68px;top:748px" width="17" height="10" viewBox="0 0 17 10"><path d="M1 4 L5 1 H14 L16 4 V7 L14 9 H3 L1 7 Z" fill="#c8c8c8" stroke="#606060" stroke-width="0.8" /><path d="M1 5 H16" fill="none" stroke="#fff" stroke-width="1" /></svg>
<svg style="left:90px;top:746px" width="17" height="16" viewBox="0 0 17 16"><rect x="0" y="5" width="6" height="10" fill="#0000a0"/><rect x="1" y="6" width="4" height="5" fill="#40c0ff"/><path d="M8 12 H17" fill="none" stroke="#808000" stroke-width="1.5" /><circle cx="11.5" cy="5" r="3" fill="none" stroke="#000" stroke-width="1.5"/><path d="M11.5 8 V12" fill="none" stroke="#000" stroke-width="1.5" /></svg>
<svg style="left:113px;top:745px" width="17" height="17" viewBox="0 0 17 17"><path d="M2 10 L10 2 L16 4 L8 12 L0 13 Z" fill="#fff" stroke="#808080" stroke-width="0.8" /><path d="M11 1 L4 9 H9 L5 16 L14 7 H9 Z" fill="#ffa000" stroke="#c06000" stroke-width="0.6" /></svg>
<div style="left:156px;top:742px;width:160px;height:23px;background:repeating-conic-gradient(#fff 0 25%,#c0c0c0 0 50%) 0 0/2px 2px;border-top:1px solid #000;border-left:1px solid #000;border-right:1px solid #fff;border-bottom:1px solid #fff;box-shadow:inset 1px 1px 0 #808080"></div>
<svg style="left:161px;top:745px" width="17" height="17" viewBox="0 0 17 17"><circle cx="8.5" cy="8.5" r="7.2" fill="#fff" stroke="#1050b0" stroke-width="2.2"/><path d="M5.5 3.5 V13.5 M5.5 9 L11 3.5 M7.5 7 L13 12.5" fill="none" stroke="#1050b0" stroke-width="2.2" /></svg>
<span style="left:182px;top:746px;font-size:15px;line-height:normal;color:#000;font-family:'Liberation Serif',serif;font-weight:bold;letter-spacing:0.2px;white-space:pre;">КОМПАС-3D V7...</span>
<div style="left:319px;top:742px;width:159px;height:23px;background:#c0c0c0;border-top:1px solid #fff;border-left:1px solid #fff;border-right:1px solid #000;border-bottom:1px solid #000;box-shadow:inset -1px -1px 0 #808080"></div>
<svg style="left:323px;top:745px" width="17" height="17" viewBox="0 0 17 17"><path d="M3.5 0.5 H12.5 L15.5 3.5 V16.5 H3.5 Z" fill="#fff" stroke="#000" stroke-width="1" /><rect x="0" y="2" width="11" height="10" fill="#0000a0"/><rect x="1" y="3" width="9" height="8" fill="#fff"/><path d="M2 4 L3.5 10 L5.5 5 L7.5 10 L9 4" fill="none" stroke="#0000a0" stroke-width="1.2" /></svg>
<span style="left:342px;top:746px;font-size:15px;line-height:normal;color:#000;font-family:'Liberation Serif',serif;font-weight:normal;letter-spacing:0px;white-space:pre;">Лаб.раб4 - Microso...</span>
<div style="left:921px;top:746px;width:12px;height:16px;background:#800000;overflow:hidden"><span style="left:0px;top:1px;font-size:12px;line-height:normal;color:#fff;font-family:'Liberation Sans',sans-serif;letter-spacing:-1px;white-space:pre;transform:scaleX(0.8);transform-origin:0 0">RU</span></div>
<div style="left:937px;top:742px;width:85px;height:24px;border-top:1px solid #808080;border-left:1px solid #808080;border-right:1px solid #fff;border-bottom:1px solid #fff"></div>
<svg style="left:940px;top:746px" width="17" height="17" viewBox="0 0 17 17"><rect x="5" y="1" width="7" height="6" fill="#303080"/><rect x="6" y="2" width="5" height="4" fill="#6080ff"/><rect x="1" y="5" width="7" height="6" fill="#303080"/><rect x="2" y="6" width="5" height="4" fill="#6080ff"/><rect x="0" y="11" width="8" height="3" fill="#e0e0ff"/><path d="M8 9 L15 16 M15 9 L8 16" fill="none" stroke="#ff2020" stroke-width="1.8" /></svg>
<svg style="left:958px;top:746px" width="17" height="17" viewBox="0 0 17 17"><circle cx="7" cy="7" r="6" fill="#707070" stroke="#404040"/><circle cx="7" cy="7" r="3" fill="#a0a0a0"/><circle cx="6" cy="6" r="1.5" fill="#fff"/><path d="M13 10 Q13 14 9 15 M15 9 Q15 16 9 17" fill="none" stroke="#8080ff" stroke-width="0.8" /></svg>
<span style="left:983px;top:745px;font-size:14px;line-height:normal;color:#000;font-family:'Liberation Sans',sans-serif;font-weight:normal;letter-spacing:-0.9px;white-space:pre;">17:53</span>
</body></html>
